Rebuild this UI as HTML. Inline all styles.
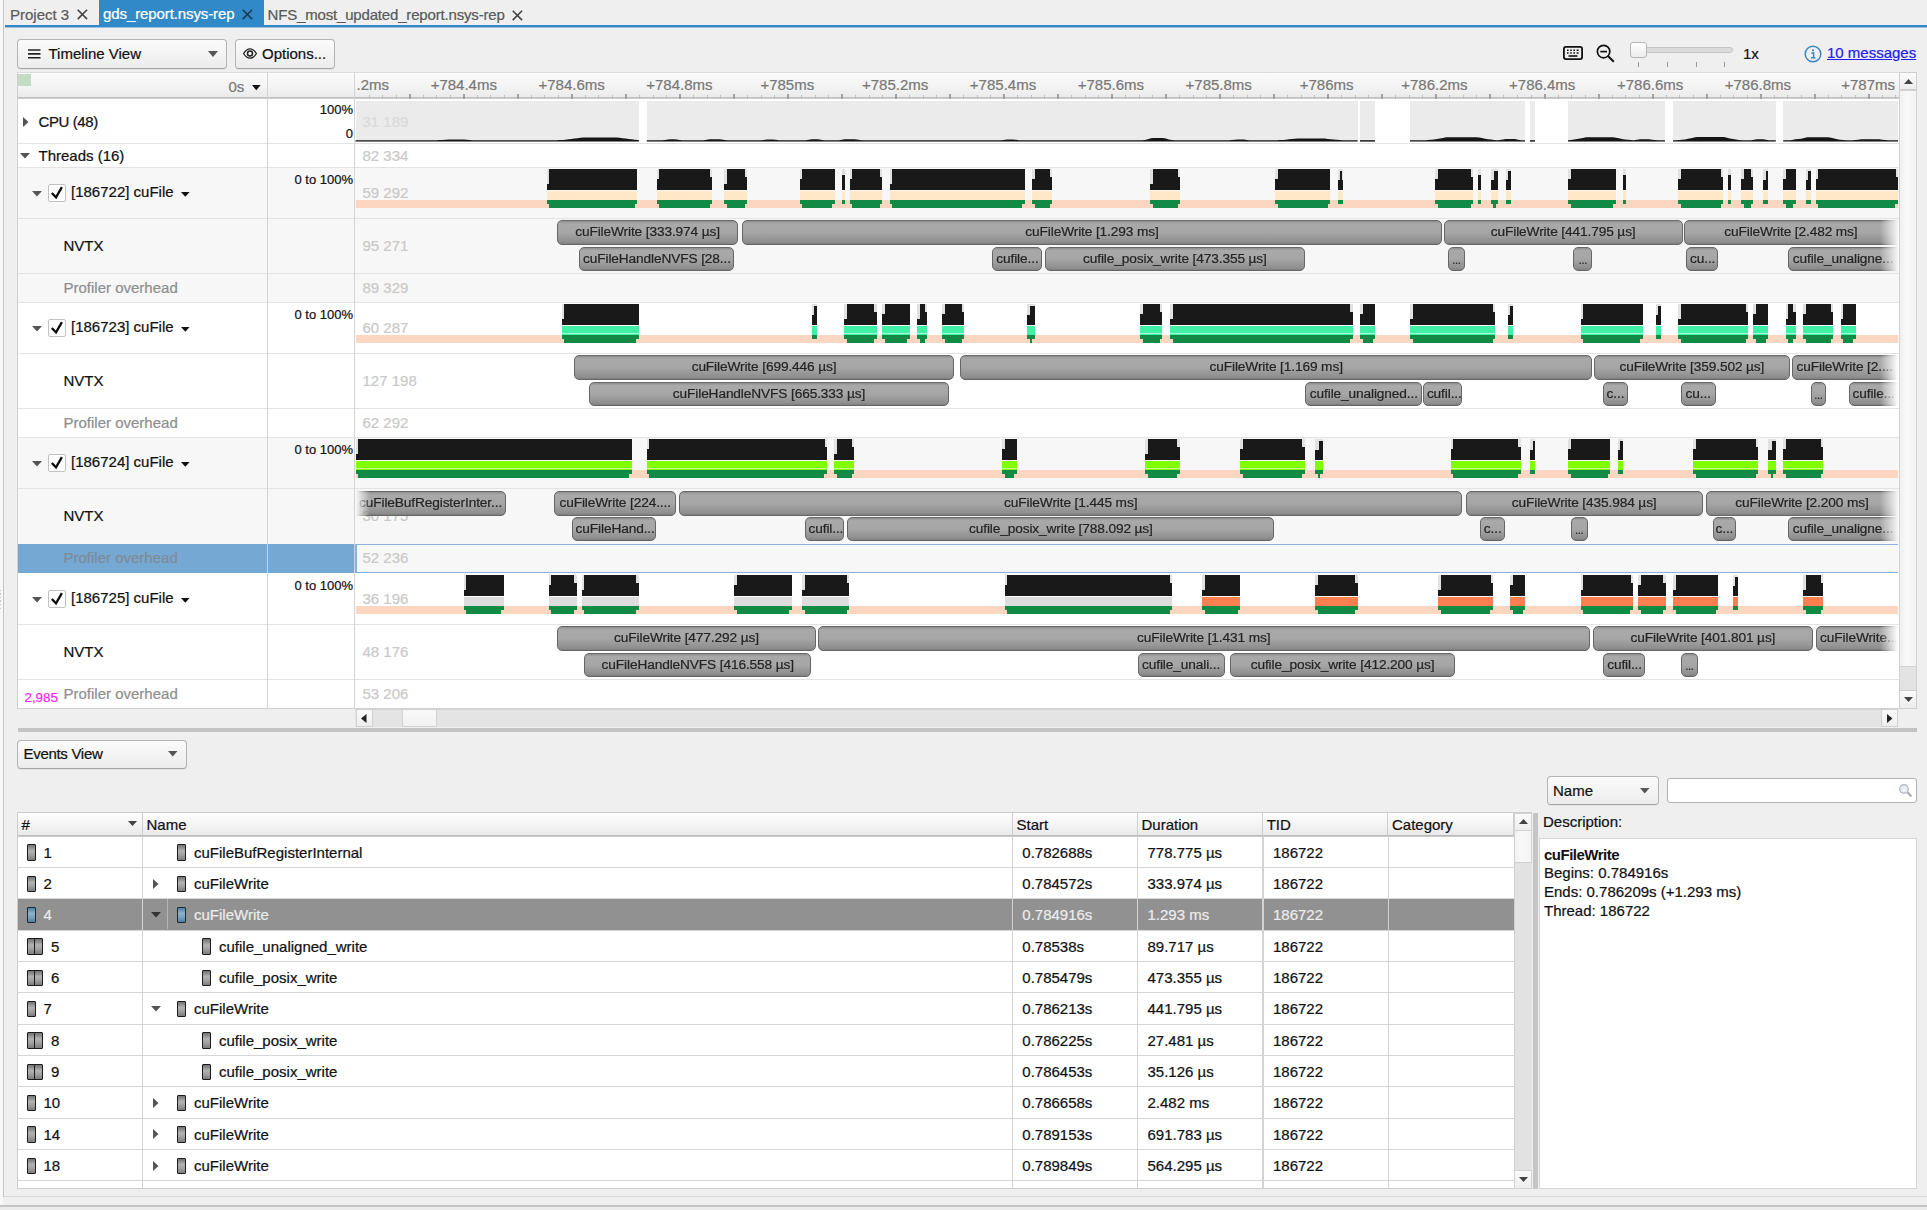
<!DOCTYPE html><html><head><meta charset="utf-8"><title>Nsight Systems</title><style>
html,body{margin:0;padding:0}
body{width:1927px;height:1210px;position:relative;overflow:hidden;background:#efefef;
font-family:"Liberation Sans",sans-serif;font-size:15px;color:#111;line-height:18px;-webkit-text-stroke:0.22px currentColor}
div{position:absolute;box-sizing:border-box;white-space:nowrap}
svg{position:absolute;overflow:visible}
.t{line-height:18px}
.g{color:#c9c9c9}
.r{text-align:right}
.combo{border:1px solid #b4b4b4;border-bottom-color:#a6a6a6;border-radius:4px;background:linear-gradient(#fbfbfb,#ececec);box-shadow:0 1px 0 rgba(0,0,0,.05)}
.nv{border:1px solid #666;border-radius:5px;background:linear-gradient(#8f8f8f 0,#a9a9a9 12%,#a6a6a6 50%,#8e8e8e 92%,#7c7c7c 100%);
color:#242424;font-size:13.7px;letter-spacing:-0.12px;line-height:22px;text-align:center;overflow:hidden;text-overflow:ellipsis;padding:0 3px}
.hl{background:#e3e3e3;height:1px}
.vl{background:#d2d2d2;width:1px}
.ic{border:1.7px solid #1c1c1c;border-radius:1px;background:linear-gradient(#727272,#b2b2b2 40%,#a2a2a2 65%,#7c7c7c)}
.icb{border:1.7px solid #1b2a35;border-radius:1px;background:linear-gradient(#4f7f9f,#8db3cb 40%,#7aa3bd 65%,#4f7f9f)}
.th{background:linear-gradient(#fdfdfd,#f4f4f4 50%,#e9e9e9);border-right:1px solid #cfcfcf}
</style></head><body>
<div style="left:0px;top:0px;width:3px;height:1210px;background:#f7f7f7"></div>
<div style="left:3px;top:0px;width:1px;height:1197px;background:#c6c6c6"></div>
<div style="left:0px;top:589.5px;width:1.3px;height:1.6px;background:#c9c9c9"></div>
<div style="left:0px;top:593.1px;width:1.3px;height:1.6px;background:#c9c9c9"></div>
<div style="left:0px;top:596.7px;width:1.3px;height:1.6px;background:#c9c9c9"></div>
<div style="left:0px;top:600.3px;width:1.3px;height:1.6px;background:#c9c9c9"></div>
<div style="left:0px;top:603.9px;width:1.3px;height:1.6px;background:#c9c9c9"></div>
<div style="left:0px;top:607.5px;width:1.3px;height:1.6px;background:#c9c9c9"></div>
<div style="left:98.5px;top:0px;width:165px;height:27px;background:#318ac7"></div>
<div style="left:5px;top:25px;width:1922px;height:2px;background:#318ac7"></div>
<div style="left:5px;top:27px;width:1922px;height:1px;background:rgba(49,138,199,.45)"></div>
<div class="t" style="left:10px;top:6px;color:#5a5a5a">Project 3</div>
<div class="t" style="left:103px;top:5px;color:#fff;letter-spacing:-0.1px">gds_report.nsys-rep</div>
<div class="t" style="left:267.5px;top:6px;color:#5a5a5a;letter-spacing:-0.17px">NFS_most_updated_report.nsys-rep</div>
<svg style="left:76.7px;top:9.3px" width="10.8" height="10.8" viewBox="0 0 12 12"><path d="M0.8 0.8L11.2 11.2M11.2 0.8L0.8 11.2" stroke="#444" stroke-width="1.8" fill="none"/></svg>
<svg style="left:241.7px;top:8.8px" width="10.8" height="10.8" viewBox="0 0 12 12"><path d="M0.8 0.8L11.2 11.2M11.2 0.8L0.8 11.2" stroke="#1a3a56" stroke-width="1.8" fill="none"/></svg>
<svg style="left:512.3px;top:9.5px" width="10.8" height="10.8" viewBox="0 0 12 12"><path d="M0.8 0.8L11.2 11.2M11.2 0.8L0.8 11.2" stroke="#444" stroke-width="1.8" fill="none"/></svg>
<div class="combo" style="left:17px;top:39px;width:210px;height:29.5px;"></div>
<svg style="left:28px;top:49px" width="13" height="10" viewBox="0 0 13 10"><path d="M0 1H12.5M0 4.9H12.5M0 8.8H12.5" stroke="#222" stroke-width="1.6" fill="none"/></svg>
<div class="t" style="left:48.5px;top:44.5px;">Timeline View</div>
<svg style="left:208px;top:51px" width="10" height="6" viewBox="0 0 10 6"><path d="M0 0H10L5 6Z" fill="#555"/></svg>
<div class="combo" style="left:235px;top:39px;width:100px;height:29.5px;"></div>
<svg style="left:243px;top:48px" width="14" height="11" viewBox="0 0 14 11"><path d="M0.6 5.5C3 1.6 5 0.8 7 0.8S11 1.6 13.4 5.5C11 9.4 9 10.2 7 10.2S3 9.4 0.6 5.5Z" stroke="#222" stroke-width="1.3" fill="none"/><circle cx="7" cy="5.5" r="2.5" stroke="#222" stroke-width="1.5" fill="none"/></svg>
<div class="t" style="left:262px;top:44.5px;">Options...</div>
<svg style="left:1563px;top:46px" width="20" height="14" viewBox="0 0 20 14"><rect x="0.9" y="0.9" width="18.2" height="12.2" rx="2" fill="none" stroke="#111" stroke-width="1.8"/><path d="M4 4.3H5.6M7.2 4.3H8.8M10.4 4.3H12M13.6 4.3H15.6M4 7H5.6M7.2 7H8.8M10.4 7H12M13.6 7H15.6" stroke="#111" stroke-width="1.5"/><path d="M5.5 10H14.5" stroke="#111" stroke-width="1.6"/></svg>
<svg style="left:1596px;top:44px" width="19" height="19" viewBox="0 0 19 19"><circle cx="7.6" cy="7.6" r="6.2" fill="none" stroke="#111" stroke-width="1.7"/><path d="M4.3 7.6H11" stroke="#111" stroke-width="1.7"/><path d="M12.2 12.2L17.8 17.8" stroke="#111" stroke-width="2"/></svg>
<div style="left:1638px;top:46.5px;width:95px;height:6px;background:#dcdcdc;border:1px solid #c4c4c4;border-radius:3px"></div>
<div style="left:1630px;top:41.5px;width:17px;height:16px;background:linear-gradient(#fff,#ececec);border:1px solid #b4b4b4;border-radius:3px"></div>
<div style="left:1638px;top:62px;width:1px;height:4.5px;background:#9a9a9a"></div>
<div style="left:1666.7px;top:62px;width:1px;height:4.5px;background:#9a9a9a"></div>
<div style="left:1695.5px;top:62px;width:1px;height:4.5px;background:#9a9a9a"></div>
<div style="left:1724.3px;top:62px;width:1px;height:4.5px;background:#9a9a9a"></div>
<div class="t" style="left:1743px;top:44.5px;">1x</div>
<svg style="left:1804px;top:45px" width="18" height="18" viewBox="0 0 18 18"><circle cx="9" cy="9" r="7.8" fill="none" stroke="#3b86c4" stroke-width="1.5"/><circle cx="9" cy="5.3" r="1.1" fill="#3b86c4"/><path d="M7.3 8H9.6V12.6M7 12.8H11.4" stroke="#3b86c4" stroke-width="1.5" fill="none"/></svg>
<div class="t" style="left:1827px;top:44px;color:#1d1df5;text-decoration:underline">10 messages</div>
<div style="left:17px;top:72px;width:1882px;height:637px;background:#fff"></div>
<div style="left:18px;top:72px;width:1881px;height:27px;background:linear-gradient(#fbfbfb,#f3f3f3 55%,#e9e9e9);border-top:1px solid #dcdcdc"></div>
<div style="left:18px;top:97px;width:1881px;height:2px;background:linear-gradient(#b9b9b9,#d4d4d4)"></div>
<div style="left:18px;top:73.5px;width:13px;height:12.5px;background:#c4dbc5"></div>
<div class="t" style="left:228.5px;top:77.5px;color:#7a7a7a">0s</div>
<svg style="left:251.5px;top:85px" width="9" height="6" viewBox="0 0 9 6"><path d="M0 0H8.6L4.3 5.3Z" fill="#111"/></svg>
<div style="left:355px;top:73px;width:1543px;height:26px;overflow:hidden">
<div style="left:13.8px;top:22px;width:1px;height:3.5px;background:#bdbdbd"></div>
<div style="left:27.3px;top:22px;width:1px;height:3.5px;background:#bdbdbd"></div>
<div style="left:40.8px;top:22px;width:1px;height:3.5px;background:#bdbdbd"></div>
<div style="left:53.8px;top:20.5px;width:2px;height:5px;background:#a2a2a2"></div>
<div style="left:67.8px;top:22px;width:1px;height:3.5px;background:#bdbdbd"></div>
<div style="left:81.3px;top:22px;width:1px;height:3.5px;background:#bdbdbd"></div>
<div style="left:94.9px;top:22px;width:1px;height:3.5px;background:#bdbdbd"></div>
<div style="left:107.9px;top:20.5px;width:2px;height:5px;background:#a2a2a2"></div>
<div style="left:121.9px;top:22px;width:1px;height:3.5px;background:#bdbdbd"></div>
<div style="left:135.4px;top:22px;width:1px;height:3.5px;background:#bdbdbd"></div>
<div style="left:148.9px;top:22px;width:1px;height:3.5px;background:#bdbdbd"></div>
<div style="left:161.9px;top:20.5px;width:2px;height:5px;background:#a2a2a2"></div>
<div style="left:175.9px;top:22px;width:1px;height:3.5px;background:#bdbdbd"></div>
<div style="left:189.4px;top:22px;width:1px;height:3.5px;background:#bdbdbd"></div>
<div style="left:202.9px;top:22px;width:1px;height:3.5px;background:#bdbdbd"></div>
<div style="left:215.9px;top:20.5px;width:2px;height:5px;background:#a2a2a2"></div>
<div style="left:229.9px;top:22px;width:1px;height:3.5px;background:#bdbdbd"></div>
<div style="left:243.4px;top:22px;width:1px;height:3.5px;background:#bdbdbd"></div>
<div style="left:256.9px;top:22px;width:1px;height:3.5px;background:#bdbdbd"></div>
<div style="left:269.9px;top:20.5px;width:2px;height:5px;background:#a2a2a2"></div>
<div style="left:284.0px;top:22px;width:1px;height:3.5px;background:#bdbdbd"></div>
<div style="left:297.5px;top:22px;width:1px;height:3.5px;background:#bdbdbd"></div>
<div style="left:311.0px;top:22px;width:1px;height:3.5px;background:#bdbdbd"></div>
<div style="left:324.0px;top:20.5px;width:2px;height:5px;background:#a2a2a2"></div>
<div style="left:338.0px;top:22px;width:1px;height:3.5px;background:#bdbdbd"></div>
<div style="left:351.5px;top:22px;width:1px;height:3.5px;background:#bdbdbd"></div>
<div style="left:365.0px;top:22px;width:1px;height:3.5px;background:#bdbdbd"></div>
<div style="left:378.0px;top:20.5px;width:2px;height:5px;background:#a2a2a2"></div>
<div style="left:392.0px;top:22px;width:1px;height:3.5px;background:#bdbdbd"></div>
<div style="left:405.5px;top:22px;width:1px;height:3.5px;background:#bdbdbd"></div>
<div style="left:419.0px;top:22px;width:1px;height:3.5px;background:#bdbdbd"></div>
<div style="left:432.0px;top:20.5px;width:2px;height:5px;background:#a2a2a2"></div>
<div style="left:446.0px;top:22px;width:1px;height:3.5px;background:#bdbdbd"></div>
<div style="left:459.6px;top:22px;width:1px;height:3.5px;background:#bdbdbd"></div>
<div style="left:473.1px;top:22px;width:1px;height:3.5px;background:#bdbdbd"></div>
<div style="left:486.1px;top:20.5px;width:2px;height:5px;background:#a2a2a2"></div>
<div style="left:500.1px;top:22px;width:1px;height:3.5px;background:#bdbdbd"></div>
<div style="left:513.6px;top:22px;width:1px;height:3.5px;background:#bdbdbd"></div>
<div style="left:527.1px;top:22px;width:1px;height:3.5px;background:#bdbdbd"></div>
<div style="left:540.1px;top:20.5px;width:2px;height:5px;background:#a2a2a2"></div>
<div style="left:554.1px;top:22px;width:1px;height:3.5px;background:#bdbdbd"></div>
<div style="left:567.6px;top:22px;width:1px;height:3.5px;background:#bdbdbd"></div>
<div style="left:581.1px;top:22px;width:1px;height:3.5px;background:#bdbdbd"></div>
<div style="left:594.1px;top:20.5px;width:2px;height:5px;background:#a2a2a2"></div>
<div style="left:608.1px;top:22px;width:1px;height:3.5px;background:#bdbdbd"></div>
<div style="left:621.6px;top:22px;width:1px;height:3.5px;background:#bdbdbd"></div>
<div style="left:635.2px;top:22px;width:1px;height:3.5px;background:#bdbdbd"></div>
<div style="left:648.2px;top:20.5px;width:2px;height:5px;background:#a2a2a2"></div>
<div style="left:662.2px;top:22px;width:1px;height:3.5px;background:#bdbdbd"></div>
<div style="left:675.7px;top:22px;width:1px;height:3.5px;background:#bdbdbd"></div>
<div style="left:689.2px;top:22px;width:1px;height:3.5px;background:#bdbdbd"></div>
<div style="left:702.2px;top:20.5px;width:2px;height:5px;background:#a2a2a2"></div>
<div style="left:716.2px;top:22px;width:1px;height:3.5px;background:#bdbdbd"></div>
<div style="left:729.7px;top:22px;width:1px;height:3.5px;background:#bdbdbd"></div>
<div style="left:743.2px;top:22px;width:1px;height:3.5px;background:#bdbdbd"></div>
<div style="left:756.2px;top:20.5px;width:2px;height:5px;background:#a2a2a2"></div>
<div style="left:770.2px;top:22px;width:1px;height:3.5px;background:#bdbdbd"></div>
<div style="left:783.7px;top:22px;width:1px;height:3.5px;background:#bdbdbd"></div>
<div style="left:797.2px;top:22px;width:1px;height:3.5px;background:#bdbdbd"></div>
<div style="left:810.3px;top:20.5px;width:2px;height:5px;background:#a2a2a2"></div>
<div style="left:824.3px;top:22px;width:1px;height:3.5px;background:#bdbdbd"></div>
<div style="left:837.8px;top:22px;width:1px;height:3.5px;background:#bdbdbd"></div>
<div style="left:851.3px;top:22px;width:1px;height:3.5px;background:#bdbdbd"></div>
<div style="left:864.3px;top:20.5px;width:2px;height:5px;background:#a2a2a2"></div>
<div style="left:878.3px;top:22px;width:1px;height:3.5px;background:#bdbdbd"></div>
<div style="left:891.8px;top:22px;width:1px;height:3.5px;background:#bdbdbd"></div>
<div style="left:905.3px;top:22px;width:1px;height:3.5px;background:#bdbdbd"></div>
<div style="left:918.3px;top:20.5px;width:2px;height:5px;background:#a2a2a2"></div>
<div style="left:932.3px;top:22px;width:1px;height:3.5px;background:#bdbdbd"></div>
<div style="left:945.8px;top:22px;width:1px;height:3.5px;background:#bdbdbd"></div>
<div style="left:959.3px;top:22px;width:1px;height:3.5px;background:#bdbdbd"></div>
<div style="left:972.3px;top:20.5px;width:2px;height:5px;background:#a2a2a2"></div>
<div style="left:986.3px;top:22px;width:1px;height:3.5px;background:#bdbdbd"></div>
<div style="left:999.9px;top:22px;width:1px;height:3.5px;background:#bdbdbd"></div>
<div style="left:1013.4px;top:22px;width:1px;height:3.5px;background:#bdbdbd"></div>
<div style="left:1026.4px;top:20.5px;width:2px;height:5px;background:#a2a2a2"></div>
<div style="left:1040.4px;top:22px;width:1px;height:3.5px;background:#bdbdbd"></div>
<div style="left:1053.9px;top:22px;width:1px;height:3.5px;background:#bdbdbd"></div>
<div style="left:1067.4px;top:22px;width:1px;height:3.5px;background:#bdbdbd"></div>
<div style="left:1080.4px;top:20.5px;width:2px;height:5px;background:#a2a2a2"></div>
<div style="left:1094.4px;top:22px;width:1px;height:3.5px;background:#bdbdbd"></div>
<div style="left:1107.9px;top:22px;width:1px;height:3.5px;background:#bdbdbd"></div>
<div style="left:1121.4px;top:22px;width:1px;height:3.5px;background:#bdbdbd"></div>
<div style="left:1134.4px;top:20.5px;width:2px;height:5px;background:#a2a2a2"></div>
<div style="left:1148.4px;top:22px;width:1px;height:3.5px;background:#bdbdbd"></div>
<div style="left:1161.9px;top:22px;width:1px;height:3.5px;background:#bdbdbd"></div>
<div style="left:1175.5px;top:22px;width:1px;height:3.5px;background:#bdbdbd"></div>
<div style="left:1188.5px;top:20.5px;width:2px;height:5px;background:#a2a2a2"></div>
<div style="left:1202.5px;top:22px;width:1px;height:3.5px;background:#bdbdbd"></div>
<div style="left:1216.0px;top:22px;width:1px;height:3.5px;background:#bdbdbd"></div>
<div style="left:1229.5px;top:22px;width:1px;height:3.5px;background:#bdbdbd"></div>
<div style="left:1242.5px;top:20.5px;width:2px;height:5px;background:#a2a2a2"></div>
<div style="left:1256.5px;top:22px;width:1px;height:3.5px;background:#bdbdbd"></div>
<div style="left:1270.0px;top:22px;width:1px;height:3.5px;background:#bdbdbd"></div>
<div style="left:1283.5px;top:22px;width:1px;height:3.5px;background:#bdbdbd"></div>
<div style="left:1296.5px;top:20.5px;width:2px;height:5px;background:#a2a2a2"></div>
<div style="left:1310.5px;top:22px;width:1px;height:3.5px;background:#bdbdbd"></div>
<div style="left:1324.0px;top:22px;width:1px;height:3.5px;background:#bdbdbd"></div>
<div style="left:1337.5px;top:22px;width:1px;height:3.5px;background:#bdbdbd"></div>
<div style="left:1350.6px;top:20.5px;width:2px;height:5px;background:#a2a2a2"></div>
<div style="left:1364.6px;top:22px;width:1px;height:3.5px;background:#bdbdbd"></div>
<div style="left:1378.1px;top:22px;width:1px;height:3.5px;background:#bdbdbd"></div>
<div style="left:1391.6px;top:22px;width:1px;height:3.5px;background:#bdbdbd"></div>
<div style="left:1404.6px;top:20.5px;width:2px;height:5px;background:#a2a2a2"></div>
<div style="left:1418.6px;top:22px;width:1px;height:3.5px;background:#bdbdbd"></div>
<div style="left:1432.1px;top:22px;width:1px;height:3.5px;background:#bdbdbd"></div>
<div style="left:1445.6px;top:22px;width:1px;height:3.5px;background:#bdbdbd"></div>
<div style="left:1458.6px;top:20.5px;width:2px;height:5px;background:#a2a2a2"></div>
<div style="left:1472.6px;top:22px;width:1px;height:3.5px;background:#bdbdbd"></div>
<div style="left:1486.1px;top:22px;width:1px;height:3.5px;background:#bdbdbd"></div>
<div style="left:1499.6px;top:22px;width:1px;height:3.5px;background:#bdbdbd"></div>
<div style="left:1512.6px;top:20.5px;width:2px;height:5px;background:#a2a2a2"></div>
<div style="left:1526.6px;top:22px;width:1px;height:3.5px;background:#bdbdbd"></div>
<div style="left:1540.2px;top:22px;width:1px;height:3.5px;background:#bdbdbd"></div>
<div style="left:1.6px;top:0;width:70px;height:24px;overflow:hidden"><div class="t" style="left:-60.7px;width:120px;text-align:center;top:2.5px;color:#787878">+784.2ms</div></div>
<div class="t" style="left:48.8px;width:120px;text-align:center;top:2.5px;color:#787878">+784.4ms</div>
<div class="t" style="left:156.6px;width:120px;text-align:center;top:2.5px;color:#787878">+784.6ms</div>
<div class="t" style="left:264.4px;width:120px;text-align:center;top:2.5px;color:#787878">+784.8ms</div>
<div class="t" style="left:372.3px;width:120px;text-align:center;top:2.5px;color:#787878">+785ms</div>
<div class="t" style="left:480.1px;width:120px;text-align:center;top:2.5px;color:#787878">+785.2ms</div>
<div class="t" style="left:588.0px;width:120px;text-align:center;top:2.5px;color:#787878">+785.4ms</div>
<div class="t" style="left:695.9px;width:120px;text-align:center;top:2.5px;color:#787878">+785.6ms</div>
<div class="t" style="left:803.7px;width:120px;text-align:center;top:2.5px;color:#787878">+785.8ms</div>
<div class="t" style="left:911.6px;width:120px;text-align:center;top:2.5px;color:#787878">+786ms</div>
<div class="t" style="left:1019.4px;width:120px;text-align:center;top:2.5px;color:#787878">+786.2ms</div>
<div class="t" style="left:1127.2px;width:120px;text-align:center;top:2.5px;color:#787878">+786.4ms</div>
<div class="t" style="left:1235.1px;width:120px;text-align:center;top:2.5px;color:#787878">+786.6ms</div>
<div class="t" style="left:1342.9px;width:120px;text-align:center;top:2.5px;color:#787878">+786.8ms</div>
<div class="t" style="right:3px;top:2.5px;color:#787878">+787ms</div>
</div>
<div style="left:18px;top:168px;width:1881px;height:135px;background:#f7f7f7"></div>
<div style="left:18px;top:438px;width:1881px;height:135px;background:#f7f7f7"></div>
<div style="left:18px;top:544px;width:337px;height:29px;background:#76a8d4"></div>
<div style="left:355px;top:544px;width:1543px;height:1px;background:#8db1d9"></div>
<div style="left:355px;top:572px;width:1543px;height:1px;background:#8db1d9"></div>
<div style="left:355px;top:545px;width:1.5px;height:28px;background:#8db1d9"></div>
<div class="hl" style="left:18px;top:143px;width:1881px;height:1px;"></div>
<div class="hl" style="left:18px;top:167px;width:1881px;height:1px;"></div>
<div class="hl" style="left:18px;top:218px;width:1881px;height:1px;"></div>
<div class="hl" style="left:18px;top:273px;width:1881px;height:1px;"></div>
<div class="hl" style="left:18px;top:302px;width:1881px;height:1px;"></div>
<div class="hl" style="left:18px;top:353px;width:1881px;height:1px;"></div>
<div class="hl" style="left:18px;top:408px;width:1881px;height:1px;"></div>
<div class="hl" style="left:18px;top:437px;width:1881px;height:1px;"></div>
<div class="hl" style="left:18px;top:488px;width:1881px;height:1px;"></div>
<div class="hl" style="left:18px;top:624px;width:1881px;height:1px;"></div>
<div class="hl" style="left:18px;top:679px;width:1881px;height:1px;"></div>
<div style="left:267px;top:72px;width:1px;height:637px;background:#d3d3d3"></div>
<div style="left:354px;top:72px;width:1px;height:637px;background:#d3d3d3"></div>
<div style="left:17px;top:72px;width:1px;height:637px;background:#d0d0d0"></div>
<div style="left:18px;top:708px;width:1899px;height:1px;background:#d0d0d0"></div>
<svg style="left:22.5px;top:116.5px" width="6" height="10" viewBox="0 0 6 10"><path d="M0 0L5.5 5L0 10Z" fill="#555"/></svg>
<div class="t" style="left:38.5px;top:112.5px;letter-spacing:-0.4px">CPU (48)</div>
<div class="t r" style="left:300px;top:100.5px;width:53px;font-size:13px">100%</div>
<div class="t r" style="left:300px;top:124.5px;width:53px;font-size:13px">0</div>
<svg style="left:20px;top:153px" width="10" height="6" viewBox="0 0 10 6"><path d="M0 0H10L5 5.5Z" fill="#555"/></svg>
<div class="t" style="left:38.5px;top:146.5px;">Threads (16)</div>
<svg style="left:32px;top:190.5px" width="10" height="6" viewBox="0 0 10 6"><path d="M0 0H10L5 5.5Z" fill="#555"/></svg>
<div style="left:48px;top:184px;width:18px;height:17.5px;background:#fff;border:1px solid #c2c2c2;border-radius:2px"></div>
<svg style="left:48px;top:184.0px" width="18" height="18" viewBox="0 0 18 18"><path d="M3.8 9L8 13.3L13.9 3.2" stroke="#0c0c0c" stroke-width="2.3" fill="none" stroke-linejoin="miter"/></svg>
<div class="t" style="left:71px;top:183.3px;">[186722] cuFile</div>
<svg style="left:180.5px;top:191.5px" width="9" height="5" viewBox="0 0 9 5"><path d="M0 0H8.6L4.3 4.8Z" fill="#111"/></svg>
<div class="t r" style="left:280px;top:171px;width:73px;font-size:13px">0 to 100%</div>
<div class="t" style="left:63.5px;top:237px;">NVTX</div>
<div class="t" style="left:63.5px;top:279px;color:#8e8e8e">Profiler overhead</div>
<svg style="left:32px;top:325.5px" width="10" height="6" viewBox="0 0 10 6"><path d="M0 0H10L5 5.5Z" fill="#555"/></svg>
<div style="left:48px;top:319px;width:18px;height:17.5px;background:#fff;border:1px solid #c2c2c2;border-radius:2px"></div>
<svg style="left:48px;top:319.0px" width="18" height="18" viewBox="0 0 18 18"><path d="M3.8 9L8 13.3L13.9 3.2" stroke="#0c0c0c" stroke-width="2.3" fill="none" stroke-linejoin="miter"/></svg>
<div class="t" style="left:71px;top:318.3px;">[186723] cuFile</div>
<svg style="left:180.5px;top:326.5px" width="9" height="5" viewBox="0 0 9 5"><path d="M0 0H8.6L4.3 4.8Z" fill="#111"/></svg>
<div class="t r" style="left:280px;top:306px;width:73px;font-size:13px">0 to 100%</div>
<div class="t" style="left:63.5px;top:372px;">NVTX</div>
<div class="t" style="left:63.5px;top:414px;color:#8e8e8e">Profiler overhead</div>
<svg style="left:32px;top:460.5px" width="10" height="6" viewBox="0 0 10 6"><path d="M0 0H10L5 5.5Z" fill="#555"/></svg>
<div style="left:48px;top:454px;width:18px;height:17.5px;background:#fff;border:1px solid #c2c2c2;border-radius:2px"></div>
<svg style="left:48px;top:454.0px" width="18" height="18" viewBox="0 0 18 18"><path d="M3.8 9L8 13.3L13.9 3.2" stroke="#0c0c0c" stroke-width="2.3" fill="none" stroke-linejoin="miter"/></svg>
<div class="t" style="left:71px;top:453.3px;">[186724] cuFile</div>
<svg style="left:180.5px;top:461.5px" width="9" height="5" viewBox="0 0 9 5"><path d="M0 0H8.6L4.3 4.8Z" fill="#111"/></svg>
<div class="t r" style="left:280px;top:441px;width:73px;font-size:13px">0 to 100%</div>
<div class="t" style="left:63.5px;top:507px;">NVTX</div>
<div class="t" style="left:63.5px;top:549px;color:#7f8b96">Profiler overhead</div>
<svg style="left:32px;top:596.5px" width="10" height="6" viewBox="0 0 10 6"><path d="M0 0H10L5 5.5Z" fill="#555"/></svg>
<div style="left:48px;top:590px;width:18px;height:17.5px;background:#fff;border:1px solid #c2c2c2;border-radius:2px"></div>
<svg style="left:48px;top:590.0px" width="18" height="18" viewBox="0 0 18 18"><path d="M3.8 9L8 13.3L13.9 3.2" stroke="#0c0c0c" stroke-width="2.3" fill="none" stroke-linejoin="miter"/></svg>
<div class="t" style="left:71px;top:589.3px;">[186725] cuFile</div>
<svg style="left:180.5px;top:597.5px" width="9" height="5" viewBox="0 0 9 5"><path d="M0 0H8.6L4.3 4.8Z" fill="#111"/></svg>
<div class="t r" style="left:280px;top:577px;width:73px;font-size:13px">0 to 100%</div>
<div class="t" style="left:63.5px;top:643px;">NVTX</div>
<div class="t" style="left:63.5px;top:685px;color:#8e8e8e">Profiler overhead</div>
<div class="t" style="left:24.5px;top:688.5px;color:#ff1fe9;font-size:13.3px">2,985</div>
<div class="t" style="left:362.5px;top:112.5px;color:#dadada;z-index:3">31 189</div>
<div class="t g" style="left:362.5px;top:146.5px;">82 334</div>
<div class="t g" style="left:362.5px;top:184px;">59 292</div>
<div class="t g" style="left:362.5px;top:237px;">95 271</div>
<div class="t g" style="left:362.5px;top:279px;">89 329</div>
<div class="t g" style="left:362.5px;top:319px;">60 287</div>
<div class="t g" style="left:362.5px;top:372px;">127 198</div>
<div class="t g" style="left:362.5px;top:414px;">62 292</div>
<div class="t g" style="left:362.5px;top:507px;">30 175</div>
<div class="t g" style="left:362.5px;top:549px;">52 236</div>
<div class="t g" style="left:362.5px;top:590px;">36 196</div>
<div class="t g" style="left:362.5px;top:643px;">48 176</div>
<div class="t g" style="left:362.5px;top:685px;">53 206</div>
<div style="left:355.5px;top:101px;width:283.4px;height:40.5px;background:#ebebeb"></div>
<div style="left:646.8px;top:101px;width:710.8px;height:40.5px;background:#ebebeb"></div>
<div style="left:1360px;top:101px;width:15px;height:40.5px;background:#ebebeb"></div>
<div style="left:1410px;top:101px;width:115px;height:40.5px;background:#ebebeb"></div>
<div style="left:1530px;top:101px;width:5px;height:40.5px;background:#ebebeb"></div>
<div style="left:1568px;top:101px;width:97px;height:40.5px;background:#ebebeb"></div>
<div style="left:1673px;top:101px;width:102.8px;height:40.5px;background:#ebebeb"></div>
<div style="left:1783.2px;top:101px;width:114.8px;height:40.5px;background:#ebebeb"></div>
<svg style="left:0;top:0" width="1927" height="150"><polygon points="355.5,141.6 355.5,140.20 358.5,140.20 361.5,140.20 364.5,140.20 367.5,140.20 370.5,140.20 373.5,140.20 376.5,140.20 379.5,140.20 382.5,140.20 385.5,140.20 388.5,140.20 391.5,140.20 394.5,140.20 397.5,140.20 400.5,140.20 403.5,140.20 406.5,140.20 409.5,140.20 412.5,140.20 415.5,140.20 418.5,140.20 421.5,140.20 424.5,140.20 427.5,140.20 430.5,140.20 433.5,140.20 436.5,140.19 439.5,140.08 442.5,139.89 445.5,139.65 448.5,139.52 451.5,139.52 454.5,139.52 457.5,139.52 460.5,139.52 463.5,139.57 466.5,139.81 469.5,140.02 472.5,140.16 475.5,140.20 478.5,140.20 481.5,140.20 484.5,140.20 487.5,140.20 490.5,140.20 493.5,140.20 496.5,140.20 499.5,140.20 502.5,140.20 505.5,140.20 508.5,140.20 511.5,140.20 514.5,140.20 517.5,140.20 520.5,140.20 523.5,140.20 526.5,140.20 529.5,140.20 532.5,140.20 535.5,140.20 538.5,140.20 541.5,140.20 544.5,140.20 547.5,140.20 550.5,140.20 553.5,140.20 556.5,140.19 559.5,140.10 562.5,139.93 565.5,139.68 568.5,139.36 571.5,138.99 574.5,138.58 577.5,138.16 580.5,137.74 583.5,137.48 586.5,137.48 589.5,137.48 592.5,137.48 595.5,137.48 598.5,137.48 601.5,137.48 604.5,137.48 607.5,137.48 610.5,137.48 613.5,137.48 616.5,137.48 619.5,137.74 622.5,138.16 625.5,138.58 628.5,138.99 631.5,139.36 634.5,139.68 637.5,139.93 638.9,140.02 638.9,141.6" fill="#151515"/></svg>
<svg style="left:0;top:0" width="1927" height="150"><polygon points="646.8,141.6 646.8,140.20 649.8,140.20 652.8,140.20 655.8,140.20 658.8,140.20 661.8,140.20 664.8,139.97 667.8,139.40 670.8,139.35 673.8,139.35 676.8,139.52 679.8,140.05 682.8,140.20 685.8,140.20 688.8,140.20 691.8,140.20 694.8,140.20 697.8,140.20 700.8,140.20 703.8,140.18 706.8,139.85 709.8,139.28 712.8,139.18 715.8,139.18 718.8,139.18 721.8,139.59 724.8,140.08 727.8,140.20 730.8,140.20 733.8,140.20 736.8,140.20 739.8,140.20 742.8,140.20 745.8,140.20 748.8,140.20 751.8,140.20 754.8,140.20 757.8,140.20 760.8,140.18 763.8,139.88 766.8,139.52 769.8,139.52 772.8,139.52 775.8,139.82 778.8,140.16 781.8,140.20 784.8,140.20 787.8,140.20 790.8,140.20 793.8,140.20 796.8,140.20 799.8,140.20 802.8,140.20 805.8,140.18 808.8,139.72 811.8,139.18 814.8,139.18 817.8,139.18 820.8,139.63 823.8,140.15 826.8,140.20 829.8,140.20 832.8,140.20 835.8,140.20 838.8,140.18 841.8,139.85 844.8,139.28 847.8,139.18 850.8,139.18 853.8,139.18 856.8,139.59 859.8,140.08 862.8,140.20 865.8,140.20 868.8,140.20 871.8,140.20 874.8,140.20 877.8,140.20 880.8,140.20 883.8,140.20 886.8,140.20 889.8,140.20 892.8,140.20 895.8,140.20 898.8,140.20 901.8,140.20 904.8,140.20 907.8,140.20 910.8,140.20 913.8,140.20 916.8,140.20 919.8,140.20 922.8,140.20 925.8,140.20 928.8,140.20 931.8,140.20 934.8,140.20 937.8,140.20 940.8,140.20 943.8,140.20 946.8,140.20 949.8,140.20 952.8,140.20 955.8,140.20 958.8,140.20 961.8,140.20 964.8,140.20 967.8,140.20 970.8,140.20 973.8,140.20 976.8,140.20 979.8,140.20 982.8,140.20 985.8,140.20 988.8,140.20 991.8,140.20 994.8,140.20 997.8,140.20 1000.8,140.18 1003.8,139.88 1006.8,139.52 1009.8,139.52 1012.8,139.52 1015.8,139.82 1018.8,140.16 1021.8,140.20 1024.8,140.20 1027.8,140.20 1030.8,140.20 1033.8,140.20 1036.8,140.20 1039.8,140.20 1042.8,140.20 1045.8,140.20 1048.8,140.20 1051.8,140.20 1054.8,140.20 1057.8,140.20 1060.8,140.20 1063.8,140.20 1066.8,140.20 1069.8,140.20 1072.8,140.20 1075.8,140.20 1078.8,140.20 1081.8,140.20 1084.8,140.20 1087.8,140.20 1090.8,140.20 1093.8,140.20 1096.8,140.20 1099.8,140.20 1102.8,140.20 1105.8,140.20 1108.8,140.20 1111.8,140.20 1114.8,140.20 1117.8,140.20 1120.8,140.20 1123.8,140.20 1126.8,140.20 1129.8,140.20 1132.8,140.20 1135.8,140.20 1138.8,140.20 1141.8,140.20 1144.8,139.96 1147.8,139.24 1150.8,138.28 1153.8,137.99 1156.8,137.99 1159.8,137.99 1162.8,137.99 1165.8,138.48 1168.8,139.41 1171.8,140.05 1174.8,140.20 1177.8,140.20 1180.8,140.20 1183.8,140.20 1186.8,140.20 1189.8,140.20 1192.8,140.20 1195.8,140.20 1198.8,140.20 1201.8,140.20 1204.8,140.20 1207.8,140.20 1210.8,140.20 1213.8,140.20 1216.8,140.20 1219.8,140.20 1222.8,140.20 1225.8,140.20 1228.8,140.20 1231.8,140.12 1234.8,139.72 1237.8,139.52 1240.8,139.52 1243.8,139.52 1246.8,139.96 1249.8,140.20 1252.8,140.20 1255.8,140.20 1258.8,140.20 1261.8,140.20 1264.8,140.20 1267.8,140.20 1270.8,140.20 1273.8,140.20 1276.8,140.18 1279.8,140.08 1282.8,139.90 1285.8,139.65 1288.8,139.34 1291.8,139.01 1294.8,138.66 1297.8,138.50 1300.8,138.50 1303.8,138.50 1306.8,138.50 1309.8,138.50 1312.8,138.50 1315.8,138.50 1318.8,138.50 1321.8,138.50 1324.8,138.62 1327.8,138.96 1330.8,139.30 1333.8,139.61 1336.8,139.87 1339.8,140.06 1342.8,140.18 1345.8,140.20 1348.8,140.20 1351.8,140.20 1354.8,140.20 1357.6,140.20 1357.6,141.6" fill="#151515"/></svg>
<svg style="left:0;top:0" width="1927" height="150"><polygon points="1360.0,141.6 1360.0,140.20 1363.0,140.20 1366.0,140.20 1369.0,140.20 1372.0,140.20 1375.0,140.20 1375.0,141.6" fill="#151515"/></svg>
<svg style="left:0;top:0" width="1927" height="150"><polygon points="1410.0,141.6 1410.0,140.20 1413.0,140.20 1416.0,140.20 1419.0,140.20 1422.0,140.20 1425.0,140.19 1428.0,140.08 1431.0,139.83 1434.0,139.46 1437.0,139.00 1440.0,138.47 1443.0,137.91 1446.0,137.34 1449.0,137.14 1452.0,137.14 1455.0,137.14 1458.0,137.14 1461.0,137.14 1464.0,137.14 1467.0,137.14 1470.0,137.14 1473.0,137.14 1476.0,137.14 1479.0,137.53 1482.0,138.09 1485.0,138.65 1488.0,139.16 1491.0,139.59 1494.0,139.92 1497.0,140.13 1500.0,140.08 1503.0,139.54 1506.0,139.01 1509.0,139.01 1512.0,139.01 1515.0,139.08 1518.0,139.75 1521.0,140.17 1524.0,140.20 1525.0,140.20 1525.0,141.6" fill="#151515"/></svg>
<svg style="left:0;top:0" width="1927" height="150"><polygon points="1530.0,141.6 1530.0,140.20 1533.0,140.20 1535.0,140.20 1535.0,141.6" fill="#151515"/></svg>
<svg style="left:0;top:0" width="1927" height="150"><polygon points="1568.0,141.6 1568.0,140.16 1571.0,139.96 1574.0,139.60 1577.0,139.11 1580.0,138.53 1583.0,137.91 1586.0,137.28 1589.0,137.14 1592.0,137.14 1595.0,137.14 1598.0,137.14 1601.0,137.14 1604.0,137.14 1607.0,137.14 1610.0,137.14 1613.0,137.14 1616.0,137.69 1619.0,138.33 1622.0,138.93 1625.0,139.45 1628.0,139.86 1631.0,140.11 1634.0,140.17 1637.0,139.82 1640.0,139.24 1643.0,139.18 1646.0,139.18 1649.0,139.18 1652.0,139.63 1655.0,140.10 1658.0,140.20 1661.0,140.20 1664.0,140.20 1665.0,140.20 1665.0,141.6" fill="#151515"/></svg>
<svg style="left:0;top:0" width="1927" height="150"><polygon points="1673.0,141.6 1673.0,140.20 1676.0,140.20 1679.0,140.11 1682.0,139.84 1685.0,139.41 1688.0,138.86 1691.0,138.22 1694.0,137.55 1697.0,136.97 1700.0,136.97 1703.0,136.97 1706.0,136.97 1709.0,136.97 1712.0,136.97 1715.0,136.97 1718.0,136.97 1721.0,136.97 1724.0,137.11 1727.0,137.78 1730.0,138.44 1733.0,139.05 1736.0,139.57 1739.0,139.95 1742.0,140.16 1745.0,140.20 1748.0,140.20 1751.0,140.17 1754.0,139.76 1757.0,139.35 1760.0,139.35 1763.0,139.35 1766.0,139.76 1769.0,140.17 1772.0,140.20 1775.0,140.20 1775.8,140.20 1775.8,141.6" fill="#151515"/></svg>
<svg style="left:0;top:0" width="1927" height="150"><polygon points="1783.2,141.6 1783.2,140.20 1786.2,140.20 1789.2,140.20 1792.2,139.98 1795.2,139.18 1798.2,138.92 1801.2,138.70 1804.2,137.98 1807.2,137.31 1810.2,137.31 1813.2,137.31 1816.2,137.31 1819.2,137.31 1822.2,137.31 1825.2,137.31 1828.2,137.31 1831.2,137.84 1834.2,138.56 1837.2,139.23 1840.2,139.76 1843.2,140.09 1846.2,140.20 1849.2,140.20 1852.2,140.15 1855.2,139.96 1858.2,139.65 1861.2,139.29 1864.2,139.18 1867.2,139.18 1870.2,139.18 1873.2,139.18 1876.2,139.18 1879.2,139.34 1882.2,139.69 1885.2,139.99 1888.2,140.17 1891.2,140.20 1894.2,140.20 1897.2,140.20 1898.0,140.20 1898.0,141.6" fill="#151515"/></svg>
<div style="left:0;top:0;width:1898px;height:720px;overflow:hidden">
<div style="left:355.5px;top:200px;width:1542.5px;height:7.5px;background:#fcd6c0"></div>
<div style="left:546.5px;top:169px;width:90.5px;height:21px;background:#191919"></div>
<div style="left:546.5px;top:169px;width:2.5px;height:15px;background:#e1e1e1"></div>
<div style="left:546.5px;top:191px;width:90.5px;height:8.5px;background:#fee8c8"></div>
<div style="left:546.5px;top:200px;width:90.5px;height:4px;background:#108a44"></div>
<div style="left:549px;top:204px;width:85.5px;height:3.5px;background:#108a44"></div>
<div style="left:656.5px;top:169px;width:55.5px;height:21px;background:#191919"></div>
<div style="left:656.5px;top:169px;width:2.5px;height:10px;background:#e1e1e1"></div>
<div style="left:709.5px;top:169px;width:2.5px;height:8px;background:#e1e1e1"></div>
<div style="left:656.5px;top:191px;width:55.5px;height:8.5px;background:#fee8c8"></div>
<div style="left:656.5px;top:200px;width:55.5px;height:4px;background:#108a44"></div>
<div style="left:659px;top:204px;width:50.5px;height:3.5px;background:#108a44"></div>
<div style="left:724px;top:169px;width:23px;height:21px;background:#191919"></div>
<div style="left:724px;top:169px;width:2.5px;height:15px;background:#e1e1e1"></div>
<div style="left:744.5px;top:169px;width:2.5px;height:8px;background:#e1e1e1"></div>
<div style="left:724px;top:191px;width:23px;height:8.5px;background:#fee8c8"></div>
<div style="left:724px;top:200px;width:23px;height:4px;background:#108a44"></div>
<div style="left:726.5px;top:204px;width:18px;height:3.5px;background:#108a44"></div>
<div style="left:799.5px;top:169px;width:35px;height:21px;background:#191919"></div>
<div style="left:799.5px;top:169px;width:2.5px;height:10px;background:#e1e1e1"></div>
<div style="left:799.5px;top:191px;width:35px;height:8.5px;background:#fee8c8"></div>
<div style="left:799.5px;top:200px;width:35px;height:4px;background:#108a44"></div>
<div style="left:802px;top:204px;width:30px;height:3.5px;background:#108a44"></div>
<div style="left:841.5px;top:169px;width:3.5px;height:12px;background:#e1e1e1"></div>
<div style="left:841.5px;top:175px;width:3.5px;height:15px;background:#191919"></div>
<div style="left:841.5px;top:191px;width:3.5px;height:8.5px;background:#fee8c8"></div>
<div style="left:841.5px;top:200px;width:3.5px;height:4px;background:#108a44"></div>
<div style="left:849.5px;top:169px;width:32.8px;height:21px;background:#191919"></div>
<div style="left:849.5px;top:169px;width:2.5px;height:10px;background:#e1e1e1"></div>
<div style="left:879.8px;top:169px;width:2.5px;height:8px;background:#e1e1e1"></div>
<div style="left:849.5px;top:191px;width:32.8px;height:8.5px;background:#fee8c8"></div>
<div style="left:849.5px;top:200px;width:32.8px;height:4px;background:#108a44"></div>
<div style="left:852px;top:204px;width:27.8px;height:3.5px;background:#108a44"></div>
<div style="left:889.7px;top:169px;width:135px;height:21px;background:#191919"></div>
<div style="left:889.7px;top:169px;width:2.5px;height:15px;background:#e1e1e1"></div>
<div style="left:889.7px;top:191px;width:135px;height:8.5px;background:#fee8c8"></div>
<div style="left:889.7px;top:200px;width:135px;height:4px;background:#108a44"></div>
<div style="left:892.2px;top:204px;width:130px;height:3.5px;background:#108a44"></div>
<div style="left:1032px;top:169px;width:20px;height:21px;background:#191919"></div>
<div style="left:1032px;top:169px;width:2.5px;height:10px;background:#e1e1e1"></div>
<div style="left:1049.5px;top:169px;width:2.5px;height:8px;background:#e1e1e1"></div>
<div style="left:1032px;top:191px;width:20px;height:8.5px;background:#fee8c8"></div>
<div style="left:1032px;top:200px;width:20px;height:4px;background:#108a44"></div>
<div style="left:1034.5px;top:204px;width:15px;height:3.5px;background:#108a44"></div>
<div style="left:1150px;top:169px;width:30px;height:21px;background:#191919"></div>
<div style="left:1150px;top:169px;width:2.5px;height:15px;background:#e1e1e1"></div>
<div style="left:1177.5px;top:169px;width:2.5px;height:8px;background:#e1e1e1"></div>
<div style="left:1150px;top:191px;width:30px;height:8.5px;background:#fee8c8"></div>
<div style="left:1150px;top:200px;width:30px;height:4px;background:#108a44"></div>
<div style="left:1152.5px;top:204px;width:25px;height:3.5px;background:#108a44"></div>
<div style="left:1275px;top:169px;width:55px;height:21px;background:#191919"></div>
<div style="left:1275px;top:169px;width:2.5px;height:10px;background:#e1e1e1"></div>
<div style="left:1275px;top:191px;width:55px;height:8.5px;background:#fee8c8"></div>
<div style="left:1275px;top:200px;width:55px;height:4px;background:#108a44"></div>
<div style="left:1277.5px;top:204px;width:50px;height:3.5px;background:#108a44"></div>
<div style="left:1338px;top:169px;width:4.5px;height:12px;background:#e1e1e1"></div>
<div style="left:1340.03px;top:171px;width:2.475px;height:19px;background:#191919"></div>
<div style="left:1338px;top:180px;width:4.5px;height:10px;background:#191919"></div>
<div style="left:1338px;top:191px;width:4.5px;height:8.5px;background:#fee8c8"></div>
<div style="left:1338px;top:200px;width:4.5px;height:4px;background:#108a44"></div>
<div style="left:1435px;top:169px;width:38px;height:21px;background:#191919"></div>
<div style="left:1435px;top:169px;width:2.5px;height:10px;background:#e1e1e1"></div>
<div style="left:1470.5px;top:169px;width:2.5px;height:8px;background:#e1e1e1"></div>
<div style="left:1435px;top:191px;width:38px;height:8.5px;background:#fee8c8"></div>
<div style="left:1435px;top:200px;width:38px;height:4px;background:#108a44"></div>
<div style="left:1437.5px;top:204px;width:33px;height:3.5px;background:#108a44"></div>
<div style="left:1478px;top:169px;width:2.5px;height:12px;background:#e1e1e1"></div>
<div style="left:1478px;top:175px;width:2.5px;height:15px;background:#191919"></div>
<div style="left:1478px;top:191px;width:2.5px;height:8.5px;background:#fee8c8"></div>
<div style="left:1478px;top:200px;width:2.5px;height:4px;background:#108a44"></div>
<div style="left:1490.5px;top:169px;width:7.5px;height:12px;background:#e1e1e1"></div>
<div style="left:1493.88px;top:171px;width:4.125px;height:19px;background:#191919"></div>
<div style="left:1490.5px;top:180px;width:7.5px;height:10px;background:#191919"></div>
<div style="left:1490.5px;top:191px;width:7.5px;height:8.5px;background:#fee8c8"></div>
<div style="left:1490.5px;top:200px;width:7.5px;height:4px;background:#108a44"></div>
<div style="left:1493px;top:204px;width:2.5px;height:3.5px;background:#108a44"></div>
<div style="left:1505.5px;top:169px;width:5px;height:12px;background:#e1e1e1"></div>
<div style="left:1507.75px;top:171px;width:2.75px;height:19px;background:#191919"></div>
<div style="left:1505.5px;top:180px;width:5px;height:10px;background:#191919"></div>
<div style="left:1505.5px;top:191px;width:5px;height:8.5px;background:#fee8c8"></div>
<div style="left:1505.5px;top:200px;width:5px;height:4px;background:#108a44"></div>
<div style="left:1568px;top:169px;width:47.5px;height:21px;background:#191919"></div>
<div style="left:1568px;top:169px;width:2.5px;height:10px;background:#e1e1e1"></div>
<div style="left:1568px;top:191px;width:47.5px;height:8.5px;background:#fee8c8"></div>
<div style="left:1568px;top:200px;width:47.5px;height:4px;background:#108a44"></div>
<div style="left:1570.5px;top:204px;width:42.5px;height:3.5px;background:#108a44"></div>
<div style="left:1623px;top:169px;width:2.6px;height:12px;background:#e1e1e1"></div>
<div style="left:1623px;top:175px;width:2.6px;height:15px;background:#191919"></div>
<div style="left:1623px;top:191px;width:2.6px;height:8.5px;background:#fee8c8"></div>
<div style="left:1623px;top:200px;width:2.6px;height:4px;background:#108a44"></div>
<div style="left:1678px;top:169px;width:45.2px;height:21px;background:#191919"></div>
<div style="left:1678px;top:169px;width:2.5px;height:10px;background:#e1e1e1"></div>
<div style="left:1720.7px;top:169px;width:2.5px;height:8px;background:#e1e1e1"></div>
<div style="left:1678px;top:191px;width:45.2px;height:8.5px;background:#fee8c8"></div>
<div style="left:1678px;top:200px;width:45.2px;height:4px;background:#108a44"></div>
<div style="left:1680.5px;top:204px;width:40.2px;height:3.5px;background:#108a44"></div>
<div style="left:1728px;top:169px;width:2.5px;height:12px;background:#e1e1e1"></div>
<div style="left:1728px;top:175px;width:2.5px;height:15px;background:#191919"></div>
<div style="left:1728px;top:191px;width:2.5px;height:8.5px;background:#fee8c8"></div>
<div style="left:1728px;top:200px;width:2.5px;height:4px;background:#108a44"></div>
<div style="left:1741px;top:169px;width:12px;height:21px;background:#191919"></div>
<div style="left:1741px;top:169px;width:2.5px;height:10px;background:#e1e1e1"></div>
<div style="left:1750.5px;top:169px;width:2.5px;height:8px;background:#e1e1e1"></div>
<div style="left:1741px;top:191px;width:12px;height:8.5px;background:#fee8c8"></div>
<div style="left:1741px;top:200px;width:12px;height:4px;background:#108a44"></div>
<div style="left:1743.5px;top:204px;width:7px;height:3.5px;background:#108a44"></div>
<div style="left:1763.3px;top:169px;width:5px;height:12px;background:#e1e1e1"></div>
<div style="left:1765.55px;top:171px;width:2.75px;height:19px;background:#191919"></div>
<div style="left:1763.3px;top:180px;width:5px;height:10px;background:#191919"></div>
<div style="left:1763.3px;top:191px;width:5px;height:8.5px;background:#fee8c8"></div>
<div style="left:1763.3px;top:200px;width:5px;height:4px;background:#108a44"></div>
<div style="left:1783.2px;top:169px;width:12.5px;height:21px;background:#191919"></div>
<div style="left:1783.2px;top:169px;width:2.5px;height:10px;background:#e1e1e1"></div>
<div style="left:1783.2px;top:191px;width:12.5px;height:8.5px;background:#fee8c8"></div>
<div style="left:1783.2px;top:200px;width:12.5px;height:4px;background:#108a44"></div>
<div style="left:1785.7px;top:204px;width:7.5px;height:3.5px;background:#108a44"></div>
<div style="left:1805.7px;top:169px;width:4.9px;height:12px;background:#e1e1e1"></div>
<div style="left:1807.9px;top:171px;width:2.695px;height:19px;background:#191919"></div>
<div style="left:1805.7px;top:180px;width:4.9px;height:10px;background:#191919"></div>
<div style="left:1805.7px;top:191px;width:4.9px;height:8.5px;background:#fee8c8"></div>
<div style="left:1805.7px;top:200px;width:4.9px;height:4px;background:#108a44"></div>
<div style="left:1815.6px;top:169px;width:82.4px;height:21px;background:#191919"></div>
<div style="left:1815.6px;top:169px;width:2.5px;height:10px;background:#e1e1e1"></div>
<div style="left:1895.5px;top:169px;width:2.5px;height:8px;background:#e1e1e1"></div>
<div style="left:1815.6px;top:191px;width:82.4px;height:8.5px;background:#fee8c8"></div>
<div style="left:1815.6px;top:200px;width:82.4px;height:4px;background:#108a44"></div>
<div style="left:1818.1px;top:204px;width:77.4px;height:3.5px;background:#108a44"></div>
<div style="left:355.5px;top:335px;width:1542.5px;height:7.5px;background:#fcd6c0"></div>
<div style="left:561.7px;top:304px;width:77.3px;height:21px;background:#191919"></div>
<div style="left:561.7px;top:304px;width:2.5px;height:15px;background:#e1e1e1"></div>
<div style="left:561.7px;top:326px;width:77.3px;height:8.5px;background:#3ff0a5"></div>
<div style="left:561.7px;top:333px;width:77.3px;height:1px;background:rgba(255,255,255,.55)"></div>
<div style="left:561.7px;top:335px;width:77.3px;height:4px;background:#108a44"></div>
<div style="left:564.2px;top:339px;width:72.3px;height:3.5px;background:#108a44"></div>
<div style="left:812px;top:304px;width:5px;height:12px;background:#e1e1e1"></div>
<div style="left:814.25px;top:306px;width:2.75px;height:19px;background:#191919"></div>
<div style="left:812px;top:315px;width:5px;height:10px;background:#191919"></div>
<div style="left:812px;top:326px;width:5px;height:8.5px;background:#3ff0a5"></div>
<div style="left:812px;top:335px;width:5px;height:4px;background:#108a44"></div>
<div style="left:844.3px;top:304px;width:32.4px;height:21px;background:#191919"></div>
<div style="left:844.3px;top:304px;width:2.5px;height:15px;background:#e1e1e1"></div>
<div style="left:874.2px;top:304px;width:2.5px;height:8px;background:#e1e1e1"></div>
<div style="left:844.3px;top:326px;width:32.4px;height:8.5px;background:#3ff0a5"></div>
<div style="left:844.3px;top:333px;width:32.4px;height:1px;background:rgba(255,255,255,.55)"></div>
<div style="left:844.3px;top:335px;width:32.4px;height:4px;background:#108a44"></div>
<div style="left:846.8px;top:339px;width:27.4px;height:3.5px;background:#108a44"></div>
<div style="left:882.2px;top:304px;width:27.4px;height:21px;background:#191919"></div>
<div style="left:882.2px;top:304px;width:2.5px;height:10px;background:#e1e1e1"></div>
<div style="left:882.2px;top:326px;width:27.4px;height:8.5px;background:#3ff0a5"></div>
<div style="left:882.2px;top:333px;width:27.4px;height:1px;background:rgba(255,255,255,.55)"></div>
<div style="left:882.2px;top:335px;width:27.4px;height:4px;background:#108a44"></div>
<div style="left:884.7px;top:339px;width:22.4px;height:3.5px;background:#108a44"></div>
<div style="left:917px;top:304px;width:10px;height:21px;background:#191919"></div>
<div style="left:917px;top:304px;width:2.5px;height:15px;background:#e1e1e1"></div>
<div style="left:924.5px;top:304px;width:2.5px;height:8px;background:#e1e1e1"></div>
<div style="left:917px;top:326px;width:10px;height:8.5px;background:#3ff0a5"></div>
<div style="left:917px;top:333px;width:10px;height:1px;background:rgba(255,255,255,.55)"></div>
<div style="left:917px;top:335px;width:10px;height:4px;background:#108a44"></div>
<div style="left:919.5px;top:339px;width:5px;height:3.5px;background:#108a44"></div>
<div style="left:942px;top:304px;width:22.4px;height:21px;background:#191919"></div>
<div style="left:942px;top:304px;width:2.5px;height:10px;background:#e1e1e1"></div>
<div style="left:961.9px;top:304px;width:2.5px;height:8px;background:#e1e1e1"></div>
<div style="left:942px;top:326px;width:22.4px;height:8.5px;background:#3ff0a5"></div>
<div style="left:942px;top:333px;width:22.4px;height:1px;background:rgba(255,255,255,.55)"></div>
<div style="left:942px;top:335px;width:22.4px;height:4px;background:#108a44"></div>
<div style="left:944.5px;top:339px;width:17.4px;height:3.5px;background:#108a44"></div>
<div style="left:1027px;top:304px;width:7.6px;height:12px;background:#e1e1e1"></div>
<div style="left:1030.42px;top:306px;width:4.18px;height:19px;background:#191919"></div>
<div style="left:1027px;top:315px;width:7.6px;height:10px;background:#191919"></div>
<div style="left:1027px;top:326px;width:7.6px;height:8.5px;background:#3ff0a5"></div>
<div style="left:1027px;top:335px;width:7.6px;height:4px;background:#108a44"></div>
<div style="left:1029.5px;top:339px;width:2.6px;height:3.5px;background:#108a44"></div>
<div style="left:1140px;top:304px;width:22.4px;height:21px;background:#191919"></div>
<div style="left:1140px;top:304px;width:2.5px;height:10px;background:#e1e1e1"></div>
<div style="left:1159.9px;top:304px;width:2.5px;height:8px;background:#e1e1e1"></div>
<div style="left:1140px;top:326px;width:22.4px;height:8.5px;background:#3ff0a5"></div>
<div style="left:1140px;top:333px;width:22.4px;height:1px;background:rgba(255,255,255,.55)"></div>
<div style="left:1140px;top:335px;width:22.4px;height:4px;background:#108a44"></div>
<div style="left:1142.5px;top:339px;width:17.4px;height:3.5px;background:#108a44"></div>
<div style="left:1170px;top:304px;width:182.7px;height:21px;background:#191919"></div>
<div style="left:1170px;top:304px;width:2.5px;height:15px;background:#e1e1e1"></div>
<div style="left:1350.2px;top:304px;width:2.5px;height:8px;background:#e1e1e1"></div>
<div style="left:1170px;top:326px;width:182.7px;height:8.5px;background:#3ff0a5"></div>
<div style="left:1170px;top:333px;width:182.7px;height:1px;background:rgba(255,255,255,.55)"></div>
<div style="left:1170px;top:335px;width:182.7px;height:4px;background:#108a44"></div>
<div style="left:1172.5px;top:339px;width:177.7px;height:3.5px;background:#108a44"></div>
<div style="left:1360px;top:304px;width:15px;height:21px;background:#191919"></div>
<div style="left:1360px;top:304px;width:2.5px;height:10px;background:#e1e1e1"></div>
<div style="left:1360px;top:326px;width:15px;height:8.5px;background:#3ff0a5"></div>
<div style="left:1360px;top:333px;width:15px;height:1px;background:rgba(255,255,255,.55)"></div>
<div style="left:1360px;top:335px;width:15px;height:4px;background:#108a44"></div>
<div style="left:1362.5px;top:339px;width:10px;height:3.5px;background:#108a44"></div>
<div style="left:1410px;top:304px;width:85.2px;height:21px;background:#191919"></div>
<div style="left:1410px;top:304px;width:2.5px;height:15px;background:#e1e1e1"></div>
<div style="left:1492.7px;top:304px;width:2.5px;height:8px;background:#e1e1e1"></div>
<div style="left:1410px;top:326px;width:85.2px;height:8.5px;background:#3ff0a5"></div>
<div style="left:1410px;top:333px;width:85.2px;height:1px;background:rgba(255,255,255,.55)"></div>
<div style="left:1410px;top:335px;width:85.2px;height:4px;background:#108a44"></div>
<div style="left:1412.5px;top:339px;width:80.2px;height:3.5px;background:#108a44"></div>
<div style="left:1508px;top:304px;width:5px;height:12px;background:#e1e1e1"></div>
<div style="left:1510.25px;top:306px;width:2.75px;height:19px;background:#191919"></div>
<div style="left:1508px;top:315px;width:5px;height:10px;background:#191919"></div>
<div style="left:1508px;top:326px;width:5px;height:8.5px;background:#3ff0a5"></div>
<div style="left:1508px;top:335px;width:5px;height:4px;background:#108a44"></div>
<div style="left:1580.5px;top:304px;width:62.3px;height:21px;background:#191919"></div>
<div style="left:1580.5px;top:304px;width:2.5px;height:15px;background:#e1e1e1"></div>
<div style="left:1580.5px;top:326px;width:62.3px;height:8.5px;background:#3ff0a5"></div>
<div style="left:1580.5px;top:333px;width:62.3px;height:1px;background:rgba(255,255,255,.55)"></div>
<div style="left:1580.5px;top:335px;width:62.3px;height:4px;background:#108a44"></div>
<div style="left:1583px;top:339px;width:57.3px;height:3.5px;background:#108a44"></div>
<div style="left:1655.5px;top:304px;width:5px;height:12px;background:#e1e1e1"></div>
<div style="left:1657.75px;top:306px;width:2.75px;height:19px;background:#191919"></div>
<div style="left:1655.5px;top:315px;width:5px;height:10px;background:#191919"></div>
<div style="left:1655.5px;top:326px;width:5px;height:8.5px;background:#3ff0a5"></div>
<div style="left:1655.5px;top:335px;width:5px;height:4px;background:#108a44"></div>
<div style="left:1678px;top:304px;width:70px;height:21px;background:#191919"></div>
<div style="left:1678px;top:304px;width:2.5px;height:15px;background:#e1e1e1"></div>
<div style="left:1745.5px;top:304px;width:2.5px;height:8px;background:#e1e1e1"></div>
<div style="left:1678px;top:326px;width:70px;height:8.5px;background:#3ff0a5"></div>
<div style="left:1678px;top:333px;width:70px;height:1px;background:rgba(255,255,255,.55)"></div>
<div style="left:1678px;top:335px;width:70px;height:4px;background:#108a44"></div>
<div style="left:1680.5px;top:339px;width:65px;height:3.5px;background:#108a44"></div>
<div style="left:1753.3px;top:304px;width:15px;height:21px;background:#191919"></div>
<div style="left:1753.3px;top:304px;width:2.5px;height:10px;background:#e1e1e1"></div>
<div style="left:1753.3px;top:326px;width:15px;height:8.5px;background:#3ff0a5"></div>
<div style="left:1753.3px;top:333px;width:15px;height:1px;background:rgba(255,255,255,.55)"></div>
<div style="left:1753.3px;top:335px;width:15px;height:4px;background:#108a44"></div>
<div style="left:1755.8px;top:339px;width:10px;height:3.5px;background:#108a44"></div>
<div style="left:1785.7px;top:304px;width:10px;height:21px;background:#191919"></div>
<div style="left:1785.7px;top:304px;width:2.5px;height:15px;background:#e1e1e1"></div>
<div style="left:1793.2px;top:304px;width:2.5px;height:8px;background:#e1e1e1"></div>
<div style="left:1785.7px;top:326px;width:10px;height:8.5px;background:#3ff0a5"></div>
<div style="left:1785.7px;top:333px;width:10px;height:1px;background:rgba(255,255,255,.55)"></div>
<div style="left:1785.7px;top:335px;width:10px;height:4px;background:#108a44"></div>
<div style="left:1788.2px;top:339px;width:5px;height:3.5px;background:#108a44"></div>
<div style="left:1803px;top:304px;width:30px;height:21px;background:#191919"></div>
<div style="left:1803px;top:304px;width:2.5px;height:10px;background:#e1e1e1"></div>
<div style="left:1830.5px;top:304px;width:2.5px;height:8px;background:#e1e1e1"></div>
<div style="left:1803px;top:326px;width:30px;height:8.5px;background:#3ff0a5"></div>
<div style="left:1803px;top:333px;width:30px;height:1px;background:rgba(255,255,255,.55)"></div>
<div style="left:1803px;top:335px;width:30px;height:4px;background:#108a44"></div>
<div style="left:1805.5px;top:339px;width:25px;height:3.5px;background:#108a44"></div>
<div style="left:1840.5px;top:304px;width:15px;height:21px;background:#191919"></div>
<div style="left:1840.5px;top:304px;width:2.5px;height:15px;background:#e1e1e1"></div>
<div style="left:1840.5px;top:326px;width:15px;height:8.5px;background:#3ff0a5"></div>
<div style="left:1840.5px;top:333px;width:15px;height:1px;background:rgba(255,255,255,.55)"></div>
<div style="left:1840.5px;top:335px;width:15px;height:4px;background:#108a44"></div>
<div style="left:1843px;top:339px;width:10px;height:3.5px;background:#108a44"></div>
<div style="left:355.5px;top:470px;width:1542.5px;height:7.5px;background:#fcd6c0"></div>
<div style="left:355.5px;top:439px;width:276px;height:21px;background:#191919"></div>
<div style="left:355.5px;top:439px;width:2.5px;height:15px;background:#e1e1e1"></div>
<div style="left:355.5px;top:461px;width:276px;height:8.5px;background:#80ff00"></div>
<div style="left:355.5px;top:468px;width:276px;height:1px;background:rgba(255,255,255,.55)"></div>
<div style="left:355.5px;top:470px;width:276px;height:4px;background:#108a44"></div>
<div style="left:358px;top:474px;width:271px;height:3.5px;background:#108a44"></div>
<div style="left:646.8px;top:439px;width:180.2px;height:21px;background:#191919"></div>
<div style="left:646.8px;top:439px;width:2.5px;height:10px;background:#e1e1e1"></div>
<div style="left:824.5px;top:439px;width:2.5px;height:8px;background:#e1e1e1"></div>
<div style="left:646.8px;top:461px;width:180.2px;height:8.5px;background:#80ff00"></div>
<div style="left:646.8px;top:468px;width:180.2px;height:1px;background:rgba(255,255,255,.55)"></div>
<div style="left:646.8px;top:470px;width:180.2px;height:4px;background:#108a44"></div>
<div style="left:649.3px;top:474px;width:175.2px;height:3.5px;background:#108a44"></div>
<div style="left:834.4px;top:439px;width:19.9px;height:21px;background:#191919"></div>
<div style="left:834.4px;top:439px;width:2.5px;height:15px;background:#e1e1e1"></div>
<div style="left:851.8px;top:439px;width:2.5px;height:8px;background:#e1e1e1"></div>
<div style="left:834.4px;top:461px;width:19.9px;height:8.5px;background:#80ff00"></div>
<div style="left:834.4px;top:468px;width:19.9px;height:1px;background:rgba(255,255,255,.55)"></div>
<div style="left:834.4px;top:470px;width:19.9px;height:4px;background:#108a44"></div>
<div style="left:836.9px;top:474px;width:14.9px;height:3.5px;background:#108a44"></div>
<div style="left:1002.2px;top:439px;width:14.5px;height:21px;background:#191919"></div>
<div style="left:1002.2px;top:439px;width:2.5px;height:10px;background:#e1e1e1"></div>
<div style="left:1002.2px;top:461px;width:14.5px;height:8.5px;background:#80ff00"></div>
<div style="left:1002.2px;top:468px;width:14.5px;height:1px;background:rgba(255,255,255,.55)"></div>
<div style="left:1002.2px;top:470px;width:14.5px;height:4px;background:#108a44"></div>
<div style="left:1004.7px;top:474px;width:9.5px;height:3.5px;background:#108a44"></div>
<div style="left:1145px;top:439px;width:34.8px;height:21px;background:#191919"></div>
<div style="left:1145px;top:439px;width:2.5px;height:15px;background:#e1e1e1"></div>
<div style="left:1177.3px;top:439px;width:2.5px;height:8px;background:#e1e1e1"></div>
<div style="left:1145px;top:461px;width:34.8px;height:8.5px;background:#80ff00"></div>
<div style="left:1145px;top:468px;width:34.8px;height:1px;background:rgba(255,255,255,.55)"></div>
<div style="left:1145px;top:470px;width:34.8px;height:4px;background:#108a44"></div>
<div style="left:1147.5px;top:474px;width:29.8px;height:3.5px;background:#108a44"></div>
<div style="left:1240px;top:439px;width:64.8px;height:21px;background:#191919"></div>
<div style="left:1240px;top:439px;width:2.5px;height:10px;background:#e1e1e1"></div>
<div style="left:1302.3px;top:439px;width:2.5px;height:8px;background:#e1e1e1"></div>
<div style="left:1240px;top:461px;width:64.8px;height:8.5px;background:#80ff00"></div>
<div style="left:1240px;top:468px;width:64.8px;height:1px;background:rgba(255,255,255,.55)"></div>
<div style="left:1240px;top:470px;width:64.8px;height:4px;background:#108a44"></div>
<div style="left:1242.5px;top:474px;width:59.8px;height:3.5px;background:#108a44"></div>
<div style="left:1315.3px;top:439px;width:7.5px;height:12px;background:#e1e1e1"></div>
<div style="left:1318.67px;top:441px;width:4.125px;height:19px;background:#191919"></div>
<div style="left:1315.3px;top:450px;width:7.5px;height:10px;background:#191919"></div>
<div style="left:1315.3px;top:461px;width:7.5px;height:8.5px;background:#80ff00"></div>
<div style="left:1315.3px;top:470px;width:7.5px;height:4px;background:#108a44"></div>
<div style="left:1317.8px;top:474px;width:2.5px;height:3.5px;background:#108a44"></div>
<div style="left:1450.5px;top:439px;width:70.1px;height:21px;background:#191919"></div>
<div style="left:1450.5px;top:439px;width:2.5px;height:10px;background:#e1e1e1"></div>
<div style="left:1518.1px;top:439px;width:2.5px;height:8px;background:#e1e1e1"></div>
<div style="left:1450.5px;top:461px;width:70.1px;height:8.5px;background:#80ff00"></div>
<div style="left:1450.5px;top:468px;width:70.1px;height:1px;background:rgba(255,255,255,.55)"></div>
<div style="left:1450.5px;top:470px;width:70.1px;height:4px;background:#108a44"></div>
<div style="left:1453px;top:474px;width:65.1px;height:3.5px;background:#108a44"></div>
<div style="left:1530.3px;top:439px;width:5px;height:12px;background:#e1e1e1"></div>
<div style="left:1532.55px;top:441px;width:2.75px;height:19px;background:#191919"></div>
<div style="left:1530.3px;top:450px;width:5px;height:10px;background:#191919"></div>
<div style="left:1530.3px;top:461px;width:5px;height:8.5px;background:#80ff00"></div>
<div style="left:1530.3px;top:470px;width:5px;height:4px;background:#108a44"></div>
<div style="left:1568.2px;top:439px;width:42.3px;height:21px;background:#191919"></div>
<div style="left:1568.2px;top:439px;width:2.5px;height:10px;background:#e1e1e1"></div>
<div style="left:1568.2px;top:461px;width:42.3px;height:8.5px;background:#80ff00"></div>
<div style="left:1568.2px;top:468px;width:42.3px;height:1px;background:rgba(255,255,255,.55)"></div>
<div style="left:1568.2px;top:470px;width:42.3px;height:4px;background:#108a44"></div>
<div style="left:1570.7px;top:474px;width:37.3px;height:3.5px;background:#108a44"></div>
<div style="left:1618px;top:439px;width:5px;height:12px;background:#e1e1e1"></div>
<div style="left:1620.25px;top:441px;width:2.75px;height:19px;background:#191919"></div>
<div style="left:1618px;top:450px;width:5px;height:10px;background:#191919"></div>
<div style="left:1618px;top:461px;width:5px;height:8.5px;background:#80ff00"></div>
<div style="left:1618px;top:470px;width:5px;height:4px;background:#108a44"></div>
<div style="left:1693.2px;top:439px;width:65.1px;height:21px;background:#191919"></div>
<div style="left:1693.2px;top:439px;width:2.5px;height:10px;background:#e1e1e1"></div>
<div style="left:1755.8px;top:439px;width:2.5px;height:8px;background:#e1e1e1"></div>
<div style="left:1693.2px;top:461px;width:65.1px;height:8.5px;background:#80ff00"></div>
<div style="left:1693.2px;top:468px;width:65.1px;height:1px;background:rgba(255,255,255,.55)"></div>
<div style="left:1693.2px;top:470px;width:65.1px;height:4px;background:#108a44"></div>
<div style="left:1695.7px;top:474px;width:60.1px;height:3.5px;background:#108a44"></div>
<div style="left:1768.3px;top:439px;width:7.5px;height:12px;background:#e1e1e1"></div>
<div style="left:1771.67px;top:441px;width:4.125px;height:19px;background:#191919"></div>
<div style="left:1768.3px;top:450px;width:7.5px;height:10px;background:#191919"></div>
<div style="left:1768.3px;top:461px;width:7.5px;height:8.5px;background:#80ff00"></div>
<div style="left:1768.3px;top:470px;width:7.5px;height:4px;background:#108a44"></div>
<div style="left:1770.8px;top:474px;width:2.5px;height:3.5px;background:#108a44"></div>
<div style="left:1783.2px;top:439px;width:39.9px;height:21px;background:#191919"></div>
<div style="left:1783.2px;top:439px;width:2.5px;height:10px;background:#e1e1e1"></div>
<div style="left:1820.6px;top:439px;width:2.5px;height:8px;background:#e1e1e1"></div>
<div style="left:1783.2px;top:461px;width:39.9px;height:8.5px;background:#80ff00"></div>
<div style="left:1783.2px;top:468px;width:39.9px;height:1px;background:rgba(255,255,255,.55)"></div>
<div style="left:1783.2px;top:470px;width:39.9px;height:4px;background:#108a44"></div>
<div style="left:1785.7px;top:474px;width:34.9px;height:3.5px;background:#108a44"></div>
<div style="left:355.5px;top:606px;width:1542.5px;height:7.5px;background:#fcd6c0"></div>
<div style="left:463.8px;top:575px;width:40.1px;height:21px;background:#191919"></div>
<div style="left:463.8px;top:575px;width:2.5px;height:15px;background:#e1e1e1"></div>
<div style="left:463.8px;top:597px;width:40.1px;height:8.5px;background:#dcdcdc"></div>
<div style="left:463.8px;top:606px;width:40.1px;height:4px;background:#108a44"></div>
<div style="left:466.3px;top:610px;width:35.1px;height:3.5px;background:#108a44"></div>
<div style="left:548.7px;top:575px;width:27.9px;height:21px;background:#191919"></div>
<div style="left:548.7px;top:575px;width:2.5px;height:10px;background:#e1e1e1"></div>
<div style="left:574.1px;top:575px;width:2.5px;height:8px;background:#e1e1e1"></div>
<div style="left:548.7px;top:597px;width:27.9px;height:8.5px;background:#dcdcdc"></div>
<div style="left:548.7px;top:606px;width:27.9px;height:4px;background:#108a44"></div>
<div style="left:551.2px;top:610px;width:22.9px;height:3.5px;background:#108a44"></div>
<div style="left:581.6px;top:575px;width:57.3px;height:21px;background:#191919"></div>
<div style="left:581.6px;top:575px;width:2.5px;height:15px;background:#e1e1e1"></div>
<div style="left:636.4px;top:575px;width:2.5px;height:8px;background:#e1e1e1"></div>
<div style="left:581.6px;top:597px;width:57.3px;height:8.5px;background:#dcdcdc"></div>
<div style="left:581.6px;top:606px;width:57.3px;height:4px;background:#108a44"></div>
<div style="left:584.1px;top:610px;width:52.3px;height:3.5px;background:#108a44"></div>
<div style="left:734px;top:575px;width:57.6px;height:21px;background:#191919"></div>
<div style="left:734px;top:575px;width:2.5px;height:10px;background:#e1e1e1"></div>
<div style="left:734px;top:597px;width:57.6px;height:8.5px;background:#dcdcdc"></div>
<div style="left:734px;top:606px;width:57.6px;height:4px;background:#108a44"></div>
<div style="left:736.5px;top:610px;width:52.6px;height:3.5px;background:#108a44"></div>
<div style="left:802px;top:575px;width:47.3px;height:21px;background:#191919"></div>
<div style="left:802px;top:575px;width:2.5px;height:15px;background:#e1e1e1"></div>
<div style="left:846.8px;top:575px;width:2.5px;height:8px;background:#e1e1e1"></div>
<div style="left:802px;top:597px;width:47.3px;height:8.5px;background:#dcdcdc"></div>
<div style="left:802px;top:606px;width:47.3px;height:4px;background:#108a44"></div>
<div style="left:804.5px;top:610px;width:42.3px;height:3.5px;background:#108a44"></div>
<div style="left:1004.7px;top:575px;width:167.6px;height:21px;background:#191919"></div>
<div style="left:1004.7px;top:575px;width:2.5px;height:10px;background:#e1e1e1"></div>
<div style="left:1169.8px;top:575px;width:2.5px;height:8px;background:#e1e1e1"></div>
<div style="left:1004.7px;top:597px;width:167.6px;height:8.5px;background:#dcdcdc"></div>
<div style="left:1004.7px;top:606px;width:167.6px;height:4px;background:#108a44"></div>
<div style="left:1007.2px;top:610px;width:162.6px;height:3.5px;background:#108a44"></div>
<div style="left:1202.2px;top:575px;width:37.9px;height:21px;background:#191919"></div>
<div style="left:1202.2px;top:575px;width:2.5px;height:15px;background:#e1e1e1"></div>
<div style="left:1202.2px;top:597px;width:37.9px;height:8.5px;background:#ff7f50"></div>
<div style="left:1202.2px;top:606px;width:37.9px;height:4px;background:#108a44"></div>
<div style="left:1204.7px;top:610px;width:32.9px;height:3.5px;background:#108a44"></div>
<div style="left:1315.3px;top:575px;width:42.3px;height:21px;background:#191919"></div>
<div style="left:1315.3px;top:575px;width:2.5px;height:10px;background:#e1e1e1"></div>
<div style="left:1355.1px;top:575px;width:2.5px;height:8px;background:#e1e1e1"></div>
<div style="left:1315.3px;top:597px;width:42.3px;height:8.5px;background:#ff7f50"></div>
<div style="left:1315.3px;top:606px;width:42.3px;height:4px;background:#108a44"></div>
<div style="left:1317.8px;top:610px;width:37.3px;height:3.5px;background:#108a44"></div>
<div style="left:1438.1px;top:575px;width:54.9px;height:21px;background:#191919"></div>
<div style="left:1438.1px;top:575px;width:2.5px;height:15px;background:#e1e1e1"></div>
<div style="left:1490.5px;top:575px;width:2.5px;height:8px;background:#e1e1e1"></div>
<div style="left:1438.1px;top:597px;width:54.9px;height:8.5px;background:#ff7f50"></div>
<div style="left:1438.1px;top:606px;width:54.9px;height:4px;background:#108a44"></div>
<div style="left:1440.6px;top:610px;width:49.9px;height:3.5px;background:#108a44"></div>
<div style="left:1510.4px;top:575px;width:15px;height:21px;background:#191919"></div>
<div style="left:1510.4px;top:575px;width:2.5px;height:10px;background:#e1e1e1"></div>
<div style="left:1510.4px;top:597px;width:15px;height:8.5px;background:#ff7f50"></div>
<div style="left:1510.4px;top:606px;width:15px;height:4px;background:#108a44"></div>
<div style="left:1512.9px;top:610px;width:10px;height:3.5px;background:#108a44"></div>
<div style="left:1580.6px;top:575px;width:52.4px;height:21px;background:#191919"></div>
<div style="left:1580.6px;top:575px;width:2.5px;height:15px;background:#e1e1e1"></div>
<div style="left:1630.5px;top:575px;width:2.5px;height:8px;background:#e1e1e1"></div>
<div style="left:1580.6px;top:597px;width:52.4px;height:8.5px;background:#ff7f50"></div>
<div style="left:1580.6px;top:606px;width:52.4px;height:4px;background:#108a44"></div>
<div style="left:1583.1px;top:610px;width:47.4px;height:3.5px;background:#108a44"></div>
<div style="left:1638px;top:575px;width:27.6px;height:21px;background:#191919"></div>
<div style="left:1638px;top:575px;width:2.5px;height:10px;background:#e1e1e1"></div>
<div style="left:1663.1px;top:575px;width:2.5px;height:8px;background:#e1e1e1"></div>
<div style="left:1638px;top:597px;width:27.6px;height:8.5px;background:#ff7f50"></div>
<div style="left:1638px;top:606px;width:27.6px;height:4px;background:#108a44"></div>
<div style="left:1640.5px;top:610px;width:22.6px;height:3.5px;background:#108a44"></div>
<div style="left:1673.1px;top:575px;width:45.1px;height:21px;background:#191919"></div>
<div style="left:1673.1px;top:575px;width:2.5px;height:15px;background:#e1e1e1"></div>
<div style="left:1673.1px;top:597px;width:45.1px;height:8.5px;background:#ff7f50"></div>
<div style="left:1673.1px;top:606px;width:45.1px;height:4px;background:#108a44"></div>
<div style="left:1675.6px;top:610px;width:40.1px;height:3.5px;background:#108a44"></div>
<div style="left:1732.8px;top:575px;width:5px;height:12px;background:#e1e1e1"></div>
<div style="left:1735.05px;top:577px;width:2.75px;height:19px;background:#191919"></div>
<div style="left:1732.8px;top:586px;width:5px;height:10px;background:#191919"></div>
<div style="left:1732.8px;top:597px;width:5px;height:8.5px;background:#ff7f50"></div>
<div style="left:1732.8px;top:606px;width:5px;height:4px;background:#108a44"></div>
<div style="left:1803.2px;top:575px;width:19.9px;height:21px;background:#191919"></div>
<div style="left:1803.2px;top:575px;width:2.5px;height:15px;background:#e1e1e1"></div>
<div style="left:1820.6px;top:575px;width:2.5px;height:8px;background:#e1e1e1"></div>
<div style="left:1803.2px;top:597px;width:19.9px;height:8.5px;background:#ff7f50"></div>
<div style="left:1803.2px;top:606px;width:19.9px;height:4px;background:#108a44"></div>
<div style="left:1805.7px;top:610px;width:14.9px;height:3.5px;background:#108a44"></div>
</div>
<div style="left:356px;top:0;width:1542px;height:720px;overflow:hidden;-webkit-mask-image:linear-gradient(90deg,transparent 0,#000 14px,#000 calc(100% - 18px),transparent 100%);mask-image:linear-gradient(90deg,transparent 0,#000 14px,#000 calc(100% - 18px),transparent 100%)">
<div class="nv" style="left:200.7px;top:220px;width:181.8px;height:25px;line-height:22px;padding-left:3px;padding-right:3px;">cuFileWrite [333.974 µs]</div>
<div class="nv" style="left:386.0px;top:220px;width:700.0px;height:25px;line-height:22px;padding-left:3px;padding-right:3px;">cuFileWrite [1.293 ms]</div>
<div class="nv" style="left:1087.8px;top:220px;width:238.8px;height:25px;line-height:22px;padding-left:3px;padding-right:3px;">cuFileWrite [441.795 µs]</div>
<div class="nv" style="left:1327.8px;top:220px;width:228.2px;height:25px;line-height:22px;padding-left:3px;padding-right:17px;">cuFileWrite [2.482 ms]</div>
<div class="nv" style="left:223.0px;top:247px;width:155.0px;height:24px;line-height:22px;padding-left:3px;padding-right:3px;text-overflow:clip;">cuFileHandleNVFS [28...</div>
<div class="nv" style="left:636.3px;top:247px;width:49.3px;height:24px;line-height:22px;padding-left:3px;padding-right:3px;text-overflow:clip;">cufile...</div>
<div class="nv" style="left:689.0px;top:247px;width:259.8px;height:24px;line-height:22px;padding-left:3px;padding-right:3px;">cufile_posix_write [473.355 µs]</div>
<div class="nv" style="left:1092.0px;top:247px;width:17.0px;height:24px;line-height:22px;padding-left:3px;padding-right:3px;text-overflow:clip;font-size:11px;letter-spacing:-0.3px;line-height:25px;padding-left:0;padding-right:0;">...</div>
<div class="nv" style="left:1217.3px;top:247px;width:19.2px;height:24px;line-height:22px;padding-left:3px;padding-right:3px;text-overflow:clip;font-size:11px;letter-spacing:-0.3px;line-height:25px;padding-left:0;padding-right:0;">...</div>
<div class="nv" style="left:1330.0px;top:247px;width:31.8px;height:24px;line-height:22px;padding-left:3px;padding-right:3px;text-overflow:clip;">cu...</div>
<div class="nv" style="left:1432.2px;top:247px;width:123.8px;height:24px;line-height:22px;padding-left:3px;padding-right:17px;text-overflow:clip;">cufile_unaligne...</div>
<div class="nv" style="left:218.1px;top:355px;width:379.9px;height:25px;line-height:22px;padding-left:3px;padding-right:3px;">cuFileWrite [699.446 µs]</div>
<div class="nv" style="left:603.9px;top:355px;width:632.6px;height:25px;line-height:22px;padding-left:3px;padding-right:3px;">cuFileWrite [1.169 ms]</div>
<div class="nv" style="left:1237.8px;top:355px;width:196.2px;height:25px;line-height:22px;padding-left:3px;padding-right:3px;">cuFileWrite [359.502 µs]</div>
<div class="nv" style="left:1435.5px;top:355px;width:120.5px;height:25px;line-height:22px;padding-left:3px;padding-right:17px;text-overflow:clip;">cuFileWrite [2....</div>
<div class="nv" style="left:233.0px;top:382px;width:360.0px;height:24px;line-height:22px;padding-left:3px;padding-right:3px;">cuFileHandleNVFS [665.333 µs]</div>
<div class="nv" style="left:949.3px;top:382px;width:117.1px;height:24px;line-height:22px;padding-left:3px;padding-right:3px;text-overflow:clip;">cufile_unaligned...</div>
<div class="nv" style="left:1066.9px;top:382px;width:39.6px;height:24px;line-height:22px;padding-left:3px;padding-right:3px;text-overflow:clip;">cufil...</div>
<div class="nv" style="left:1247.2px;top:382px;width:24.5px;height:24px;line-height:22px;padding-left:3px;padding-right:3px;text-overflow:clip;padding-left:0;padding-right:0;">c...</div>
<div class="nv" style="left:1325.0px;top:382px;width:34.5px;height:24px;line-height:22px;padding-left:3px;padding-right:3px;text-overflow:clip;">cu...</div>
<div class="nv" style="left:1455.1px;top:382px;width:14.5px;height:24px;line-height:22px;padding-left:3px;padding-right:3px;text-overflow:clip;font-size:11px;letter-spacing:-0.3px;line-height:25px;padding-left:0;padding-right:0;">...</div>
<div class="nv" style="left:1492.5px;top:382px;width:63.5px;height:24px;line-height:22px;padding-left:3px;padding-right:17px;text-overflow:clip;">cufile...</div>
<div class="nv" style="left:-16.0px;top:491px;width:166.1px;height:25px;line-height:22px;padding-left:18px;padding-right:3px;text-overflow:clip;">cuFileBufRegisterInter...</div>
<div class="nv" style="left:198.2px;top:491px;width:122.0px;height:25px;line-height:22px;padding-left:3px;padding-right:3px;text-overflow:clip;">cuFileWrite [224....</div>
<div class="nv" style="left:323.2px;top:491px;width:783.0px;height:25px;line-height:22px;padding-left:3px;padding-right:3px;">cuFileWrite [1.445 ms]</div>
<div class="nv" style="left:1109.6px;top:491px;width:237.2px;height:25px;line-height:22px;padding-left:3px;padding-right:3px;">cuFileWrite [435.984 µs]</div>
<div class="nv" style="left:1350.0px;top:491px;width:206.0px;height:25px;line-height:22px;padding-left:3px;padding-right:17px;">cuFileWrite [2.200 ms]</div>
<div class="nv" style="left:215.6px;top:517px;width:84.7px;height:24px;line-height:22px;padding-left:3px;padding-right:3px;text-overflow:clip;">cuFileHand...</div>
<div class="nv" style="left:448.5px;top:517px;width:39.6px;height:24px;line-height:22px;padding-left:3px;padding-right:3px;text-overflow:clip;">cufil...</div>
<div class="nv" style="left:491.3px;top:517px;width:427.2px;height:24px;line-height:22px;padding-left:3px;padding-right:3px;">cufile_posix_write [788.092 µs]</div>
<div class="nv" style="left:1124.4px;top:517px;width:24.6px;height:24px;line-height:22px;padding-left:3px;padding-right:3px;text-overflow:clip;padding-left:0;padding-right:0;">c...</div>
<div class="nv" style="left:1214.7px;top:517px;width:16.9px;height:24px;line-height:22px;padding-left:3px;padding-right:3px;text-overflow:clip;font-size:11px;letter-spacing:-0.3px;line-height:25px;padding-left:0;padding-right:0;">...</div>
<div class="nv" style="left:1357.2px;top:517px;width:22.4px;height:24px;line-height:22px;padding-left:3px;padding-right:3px;text-overflow:clip;padding-left:0;padding-right:0;">c...</div>
<div class="nv" style="left:1432.2px;top:517px;width:123.8px;height:24px;line-height:22px;padding-left:3px;padding-right:17px;text-overflow:clip;">cufile_unaligne...</div>
<div class="nv" style="left:200.7px;top:626px;width:259.6px;height:25px;line-height:22px;padding-left:3px;padding-right:3px;">cuFileWrite [477.292 µs]</div>
<div class="nv" style="left:461.5px;top:626px;width:772.5px;height:25px;line-height:22px;padding-left:3px;padding-right:3px;">cuFileWrite [1.431 ms]</div>
<div class="nv" style="left:1237.3px;top:626px;width:219.3px;height:25px;line-height:22px;padding-left:3px;padding-right:3px;">cuFileWrite [401.801 µs]</div>
<div class="nv" style="left:1460.1px;top:626px;width:95.9px;height:25px;line-height:22px;padding-left:3px;padding-right:17px;text-overflow:clip;">cuFileWrite...</div>
<div class="nv" style="left:228.1px;top:653px;width:227.4px;height:24px;line-height:22px;padding-left:3px;padding-right:3px;">cuFileHandleNVFS [416.558 µs]</div>
<div class="nv" style="left:781.5px;top:653px;width:87.2px;height:24px;line-height:22px;padding-left:3px;padding-right:3px;text-overflow:clip;">cufile_unali...</div>
<div class="nv" style="left:874.1px;top:653px;width:224.9px;height:24px;line-height:22px;padding-left:3px;padding-right:3px;">cufile_posix_write [412.200 µs]</div>
<div class="nv" style="left:1247.2px;top:653px;width:42.2px;height:24px;line-height:22px;padding-left:3px;padding-right:3px;text-overflow:clip;">cufil...</div>
<div class="nv" style="left:1325.0px;top:653px;width:16.7px;height:24px;line-height:22px;padding-left:3px;padding-right:3px;text-overflow:clip;font-size:11px;letter-spacing:-0.3px;line-height:25px;padding-left:0;padding-right:0;">...</div>
</div>
<div style="left:1899px;top:72px;width:17.5px;height:637px;background:#e3e3e3;border-left:1px solid #d0d0d0;border-right:1px solid #d0d0d0"></div>
<div style="left:1899px;top:72px;width:17.5px;height:18px;background:linear-gradient(#fafafa,#ededed);border:1px solid #cfcfcf"></div>
<div style="left:1899px;top:90px;width:17.5px;height:577px;background:linear-gradient(90deg,#f0f0f0,#f8f8f8 40%,#f3f3f3);border:1px solid #d2d2d2"></div>
<div style="left:1899px;top:690px;width:17.5px;height:18.5px;background:linear-gradient(#fafafa,#ededed);border:1px solid #cfcfcf"></div>
<svg style="left:1903.5px;top:78.5px" width="9" height="5"><path d="M0 5H9L4.5 0Z" fill="#444"/></svg>
<svg style="left:1903.5px;top:697px" width="9" height="5"><path d="M0 0H9L4.5 5Z" fill="#444"/></svg>
<div style="left:355px;top:709px;width:1543px;height:18px;background:#e4e4e4;border-top:1px solid #d4d4d4"></div>
<div style="left:355.5px;top:709px;width:17px;height:18px;background:linear-gradient(#fafafa,#eeeeee);border:1px solid #d2d2d2"></div>
<div style="left:1880.5px;top:709px;width:17.5px;height:18px;background:linear-gradient(#fafafa,#eeeeee);border:1px solid #d2d2d2"></div>
<div style="left:402px;top:709px;width:34.5px;height:18px;background:linear-gradient(#f9f9f9,#f1f1f1);border:1px solid #d2d2d2"></div>
<svg style="left:361px;top:713.5px" width="6" height="9"><path d="M5.5 0V9L0 4.5Z" fill="#222"/></svg>
<svg style="left:1887px;top:713.5px" width="6" height="9"><path d="M0 0V9L5.5 4.5Z" fill="#222"/></svg>
<div style="left:18px;top:727.5px;width:1899px;height:4px;background:#c3c3c3"></div>
<div class="combo" style="left:17px;top:740px;width:170px;height:28.5px;"></div>
<div class="t" style="left:23.5px;top:745px;letter-spacing:-0.3px">Events View</div>
<svg style="left:167.5px;top:751px" width="10" height="6"><path d="M0 0H9.5L4.75 5.5Z" fill="#555"/></svg>
<div class="combo" style="left:1547px;top:776px;width:112px;height:28.5px;"></div>
<div class="t" style="left:1553px;top:781.5px;">Name</div>
<svg style="left:1639.5px;top:787.5px" width="10" height="6"><path d="M0 0H9.5L4.75 5.5Z" fill="#555"/></svg>
<div style="left:1667px;top:777.5px;width:250px;height:25.5px;background:#fff;border:1px solid #b2b2b2;border-radius:3px"></div>
<svg style="left:1898px;top:783px" width="15" height="15" viewBox="0 0 15 15"><circle cx="6" cy="6" r="4.3" fill="#eaf1f7" stroke="#b4bec7" stroke-width="1.4"/><path d="M9.3 9.3L13.5 13.5" stroke="#b0b0b0" stroke-width="2.2"/></svg>
<div style="left:17px;top:812px;width:1515px;height:376.5px;background:#fff;border:1px solid #cdcdcd"></div>
<div class="th" style="left:18px;top:813px;width:124.5px;height:23px;"><div class="t" style="left:3.5px;top:2.5px">#</div></div>
<div class="th" style="left:142.5px;top:813px;width:870px;height:23px;"><div class="t" style="left:4px;top:2.5px">Name</div></div>
<div class="th" style="left:1012.5px;top:813px;width:125px;height:23px;"><div class="t" style="left:4px;top:2.5px">Start</div></div>
<div class="th" style="left:1137.5px;top:813px;width:125.2px;height:23px;"><div class="t" style="left:4px;top:2.5px">Duration</div></div>
<div class="th" style="left:1262.7px;top:813px;width:125.3px;height:23px;"><div class="t" style="left:4px;top:2.5px">TID</div></div>
<div class="th" style="left:1388px;top:813px;width:126px;height:23px;"><div class="t" style="left:4px;top:2.5px">Category</div></div>
<div style="left:18px;top:835px;width:1496px;height:2px;background:linear-gradient(#b5b5b5,#d0d0d0)"></div>
<svg style="left:128px;top:821px" width="9" height="5"><path d="M0 0H9L4.5 5Z" fill="#444"/></svg>
<div style="left:18px;top:837px;width:1496px;height:351px;overflow:hidden">
<div class="ic" style="left:9px;top:7.2px;width:9.3px;height:16.5px;"></div>
<div class="t" style="left:25.5px;top:6.7px;">1</div>
<div class="ic" style="left:159px;top:7.2px;width:9.3px;height:16.5px;"></div>
<div class="t" style="left:176px;top:6.7px;">cuFileBufRegisterInternal</div>
<div class="t" style="left:1004.3px;top:6.7px;">0.782688s</div>
<div class="t" style="left:1129.5px;top:6.7px;">778.775 µs</div>
<div class="t" style="left:1255px;top:6.7px;">186722</div>
<div class="ic" style="left:9px;top:38.53px;width:9.3px;height:16.5px;"></div>
<div class="t" style="left:25.5px;top:38.0px;">2</div>
<svg style="left:134.5px;top:41.5px" width="6" height="10"><path d="M0 0L5.5 5L0 10Z" fill="#555"/></svg>
<div class="ic" style="left:159px;top:38.53px;width:9.3px;height:16.5px;"></div>
<div class="t" style="left:176px;top:38.0px;">cuFileWrite</div>
<div class="t" style="left:1004.3px;top:38.0px;">0.784572s</div>
<div class="t" style="left:1129.5px;top:38.0px;">333.974 µs</div>
<div class="t" style="left:1255px;top:38.0px;">186722</div>
<div style="left:0px;top:62px;width:1496px;height:32px;background:#919191"></div>
<div class="icb" style="left:9px;top:69.86px;width:9.3px;height:16.5px;"></div>
<div class="t" style="left:25.5px;top:69.4px;color:#ececec;">4</div>
<svg style="left:132.5px;top:75.4px" width="10" height="6"><path d="M0 0H10L5 5.5Z" fill="#333"/></svg>
<div class="icb" style="left:159px;top:69.86px;width:9.3px;height:16.5px;"></div>
<div class="t" style="left:176px;top:69.4px;color:#ececec;">cuFileWrite</div>
<div class="t" style="left:1004.3px;top:69.4px;color:#ececec;">0.784916s</div>
<div class="t" style="left:1129.5px;top:69.4px;color:#ececec;">1.293 ms</div>
<div class="t" style="left:1255px;top:69.4px;color:#ececec;">186722</div>
<div class="ic" style="left:9px;top:101.19px;width:9.3px;height:16.5px;"></div>
<div class="ic" style="left:16.2px;top:101.19px;width:9.3px;height:16.5px;"></div>
<div class="t" style="left:33px;top:100.7px;">5</div>
<div class="ic" style="left:184px;top:101.19px;width:9.3px;height:16.5px;"></div>
<div class="t" style="left:201px;top:100.7px;">cufile_unaligned_write</div>
<div class="t" style="left:1004.3px;top:100.7px;">0.78538s</div>
<div class="t" style="left:1129.5px;top:100.7px;">89.717 µs</div>
<div class="t" style="left:1255px;top:100.7px;">186722</div>
<div class="ic" style="left:9px;top:132.52px;width:9.3px;height:16.5px;"></div>
<div class="ic" style="left:16.2px;top:132.52px;width:9.3px;height:16.5px;"></div>
<div class="t" style="left:33px;top:132.0px;">6</div>
<div class="ic" style="left:184px;top:132.52px;width:9.3px;height:16.5px;"></div>
<div class="t" style="left:201px;top:132.0px;">cufile_posix_write</div>
<div class="t" style="left:1004.3px;top:132.0px;">0.785479s</div>
<div class="t" style="left:1129.5px;top:132.0px;">473.355 µs</div>
<div class="t" style="left:1255px;top:132.0px;">186722</div>
<div class="ic" style="left:9px;top:163.85px;width:9.3px;height:16.5px;"></div>
<div class="t" style="left:25.5px;top:163.4px;">7</div>
<svg style="left:132.5px;top:169.4px" width="10" height="6"><path d="M0 0H10L5 5.5Z" fill="#555"/></svg>
<div class="ic" style="left:159px;top:163.85px;width:9.3px;height:16.5px;"></div>
<div class="t" style="left:176px;top:163.4px;">cuFileWrite</div>
<div class="t" style="left:1004.3px;top:163.4px;">0.786213s</div>
<div class="t" style="left:1129.5px;top:163.4px;">441.795 µs</div>
<div class="t" style="left:1255px;top:163.4px;">186722</div>
<div class="ic" style="left:9px;top:195.18px;width:9.3px;height:16.5px;"></div>
<div class="ic" style="left:16.2px;top:195.18px;width:9.3px;height:16.5px;"></div>
<div class="t" style="left:33px;top:194.7px;">8</div>
<div class="ic" style="left:184px;top:195.18px;width:9.3px;height:16.5px;"></div>
<div class="t" style="left:201px;top:194.7px;">cufile_posix_write</div>
<div class="t" style="left:1004.3px;top:194.7px;">0.786225s</div>
<div class="t" style="left:1129.5px;top:194.7px;">27.481 µs</div>
<div class="t" style="left:1255px;top:194.7px;">186722</div>
<div class="ic" style="left:9px;top:226.51px;width:9.3px;height:16.5px;"></div>
<div class="ic" style="left:16.2px;top:226.51px;width:9.3px;height:16.5px;"></div>
<div class="t" style="left:33px;top:226.0px;">9</div>
<div class="ic" style="left:184px;top:226.51px;width:9.3px;height:16.5px;"></div>
<div class="t" style="left:201px;top:226.0px;">cufile_posix_write</div>
<div class="t" style="left:1004.3px;top:226.0px;">0.786453s</div>
<div class="t" style="left:1129.5px;top:226.0px;">35.126 µs</div>
<div class="t" style="left:1255px;top:226.0px;">186722</div>
<div class="ic" style="left:9px;top:257.84px;width:9.3px;height:16.5px;"></div>
<div class="t" style="left:25.5px;top:257.3px;">10</div>
<svg style="left:134.5px;top:260.8px" width="6" height="10"><path d="M0 0L5.5 5L0 10Z" fill="#555"/></svg>
<div class="ic" style="left:159px;top:257.84px;width:9.3px;height:16.5px;"></div>
<div class="t" style="left:176px;top:257.3px;">cuFileWrite</div>
<div class="t" style="left:1004.3px;top:257.3px;">0.786658s</div>
<div class="t" style="left:1129.5px;top:257.3px;">2.482 ms</div>
<div class="t" style="left:1255px;top:257.3px;">186722</div>
<div class="ic" style="left:9px;top:289.17px;width:9.3px;height:16.5px;"></div>
<div class="t" style="left:25.5px;top:288.7px;">14</div>
<svg style="left:134.5px;top:292.2px" width="6" height="10"><path d="M0 0L5.5 5L0 10Z" fill="#555"/></svg>
<div class="ic" style="left:159px;top:289.17px;width:9.3px;height:16.5px;"></div>
<div class="t" style="left:176px;top:288.7px;">cuFileWrite</div>
<div class="t" style="left:1004.3px;top:288.7px;">0.789153s</div>
<div class="t" style="left:1129.5px;top:288.7px;">691.783 µs</div>
<div class="t" style="left:1255px;top:288.7px;">186722</div>
<div class="ic" style="left:9px;top:320.5px;width:9.3px;height:16.5px;"></div>
<div class="t" style="left:25.5px;top:320.0px;">18</div>
<svg style="left:134.5px;top:323.5px" width="6" height="10"><path d="M0 0L5.5 5L0 10Z" fill="#555"/></svg>
<div class="ic" style="left:159px;top:320.5px;width:9.3px;height:16.5px;"></div>
<div class="t" style="left:176px;top:320.0px;">cuFileWrite</div>
<div class="t" style="left:1004.3px;top:320.0px;">0.789849s</div>
<div class="t" style="left:1129.5px;top:320.0px;">564.295 µs</div>
<div class="t" style="left:1255px;top:320.0px;">186722</div>
<div style="left:0px;top:30px;width:1496px;height:1.3px;background:#d6d6d6"></div>
<div style="left:0px;top:61px;width:1496px;height:1.3px;background:#d6d6d6"></div>
<div style="left:0px;top:93px;width:1496px;height:1.3px;background:#d6d6d6"></div>
<div style="left:0px;top:124px;width:1496px;height:1.3px;background:#d6d6d6"></div>
<div style="left:0px;top:155px;width:1496px;height:1.3px;background:#d6d6d6"></div>
<div style="left:0px;top:187px;width:1496px;height:1.3px;background:#d6d6d6"></div>
<div style="left:0px;top:218px;width:1496px;height:1.3px;background:#d6d6d6"></div>
<div style="left:0px;top:249px;width:1496px;height:1.3px;background:#d6d6d6"></div>
<div style="left:0px;top:281px;width:1496px;height:1.3px;background:#d6d6d6"></div>
<div style="left:0px;top:312px;width:1496px;height:1.3px;background:#d6d6d6"></div>
<div style="left:0px;top:343px;width:1496px;height:1.3px;background:#d6d6d6"></div>
<div style="left:124px;top:0px;width:1.4px;height:352px;background:#d3d3d3"></div>
<div style="left:994px;top:0px;width:1.4px;height:352px;background:#d3d3d3"></div>
<div style="left:1119px;top:0px;width:1.4px;height:352px;background:#d3d3d3"></div>
<div style="left:1244.2px;top:0px;width:1.4px;height:352px;background:#d3d3d3"></div>
<div style="left:1369.5px;top:0px;width:1.4px;height:352px;background:#d3d3d3"></div>
<div style="left:148.5px;top:62px;width:1.2px;height:30px;background:#b5b5b5"></div>
</div>
<div style="left:1514px;top:813px;width:17.5px;height:375.5px;background:#e2e2e2;border-left:1px solid #d0d0d0"></div>
<div style="left:1514px;top:813px;width:17.5px;height:17.5px;background:linear-gradient(#fafafa,#eeeeee);border:1px solid #d2d2d2"></div>
<div style="left:1514px;top:830px;width:17.5px;height:32.5px;background:linear-gradient(90deg,#f1f1f1,#f9f9f9 40%,#f3f3f3);border:1px solid #d2d2d2"></div>
<div style="left:1514px;top:1170px;width:17.5px;height:18.5px;background:linear-gradient(#fafafa,#eeeeee);border:1px solid #d2d2d2"></div>
<svg style="left:1518.5px;top:819px" width="9" height="5"><path d="M0 5H9L4.5 0Z" fill="#444"/></svg>
<svg style="left:1518.5px;top:1177px" width="9" height="5"><path d="M0 0H9L4.5 5Z" fill="#444"/></svg>
<div style="left:1533px;top:812.5px;width:5px;height:376px;background:#c5c5c5"></div>
<div class="t" style="left:1543px;top:813px;">Description:</div>
<div style="left:1538.5px;top:838px;width:378.5px;height:350.5px;background:#fff;border:1px solid #d4d4d4"></div>
<div class="t" style="left:1544px;top:845.5px;font-weight:bold;-webkit-text-stroke:0;letter-spacing:-0.5px">cuFileWrite</div>
<div class="t" style="left:1544px;top:864.3px;">Begins: 0.784916s</div>
<div class="t" style="left:1544px;top:883.1px;">Ends: 0.786209s (+1.293 ms)</div>
<div class="t" style="left:1544px;top:901.9px;">Thread: 186722</div>
<div style="left:4px;top:1196px;width:1923px;height:1px;background:#d9d9d9"></div>
<div style="left:0px;top:1204.5px;width:1927px;height:2px;background:#c4c4c4"></div>
<div style="left:0px;top:1206.5px;width:1927px;height:3.5px;background:#ebebeb"></div>
</body></html>
